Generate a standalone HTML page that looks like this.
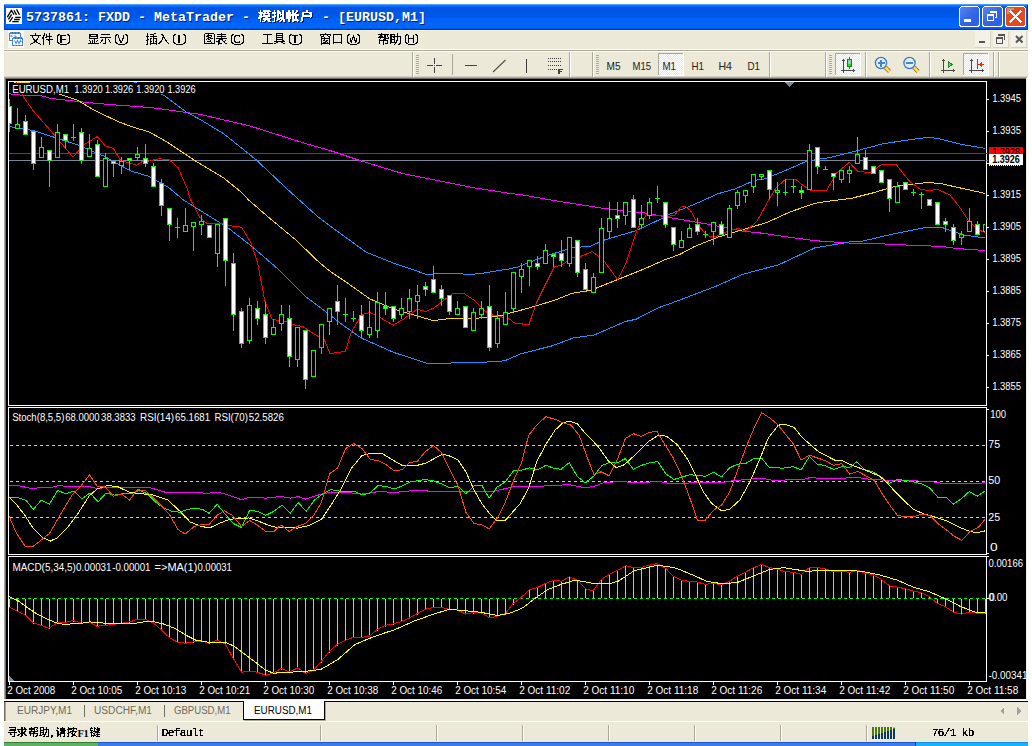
<!DOCTYPE html>
<html><head><meta charset="utf-8"><title>MetaTrader</title>
<style>html,body{margin:0;padding:0;background:#fff;overflow:hidden;width:1032px;height:746px}svg{display:block}text{white-space:pre}</style>
</head><body><svg width="1032" height="746" viewBox="0 0 1032 746" shape-rendering="crispEdges">
<rect x="0" y="0" width="1032" height="746" fill="#ffffff" />
<rect x="4" y="4" width="1024" height="1" fill="#4a9cff" />
<rect x="4" y="5" width="1024" height="1" fill="#1a78ff" />
<rect x="4" y="6" width="1024" height="1" fill="#0866f4" />
<rect x="4" y="7" width="1024" height="1" fill="#005ceb" />
<rect x="4" y="8" width="1024" height="1" fill="#0055e5" />
<rect x="4" y="9" width="1024" height="1" fill="#0055e5" />
<rect x="4" y="10" width="1024" height="1" fill="#0055e5" />
<rect x="4" y="11" width="1024" height="1" fill="#0055e5" />
<rect x="4" y="12" width="1024" height="1" fill="#0055e5" />
<rect x="4" y="13" width="1024" height="1" fill="#0058ea" />
<rect x="4" y="14" width="1024" height="1" fill="#0058ea" />
<rect x="4" y="15" width="1024" height="1" fill="#0058ea" />
<rect x="4" y="16" width="1024" height="1" fill="#0058ea" />
<rect x="4" y="17" width="1024" height="1" fill="#0058ea" />
<rect x="4" y="18" width="1024" height="1" fill="#0062f5" />
<rect x="4" y="19" width="1024" height="1" fill="#0062f5" />
<rect x="4" y="20" width="1024" height="1" fill="#0062f5" />
<rect x="4" y="21" width="1024" height="1" fill="#0062f5" />
<rect x="4" y="22" width="1024" height="1" fill="#0062f5" />
<rect x="4" y="23" width="1024" height="1" fill="#0066fa" />
<rect x="4" y="24" width="1024" height="1" fill="#0066fa" />
<rect x="4" y="25" width="1024" height="1" fill="#0066fa" />
<rect x="4" y="26" width="1024" height="1" fill="#0066fa" />
<rect x="4" y="27" width="1024" height="1" fill="#0066fa" />
<rect x="4" y="28" width="1024" height="1" fill="#0055e5" />
<rect x="4" y="29" width="1024" height="1" fill="#0036c8" />
<rect x="4" y="5" width="1" height="25" fill="#0046d8" />
<rect x="1027" y="5" width="1" height="25" fill="#0033b8" />
<rect x="6" y="8" width="16" height="16" fill="#ffffff" />
<g stroke="#000" stroke-width="1.3" fill="none" shape-rendering="geometricPrecision"><path d="M7.3,17.2 L11.3,10.5 L14.1,14.7 M13.9,10.2 L16.5,14.9 M16.5,9.4 L19.5,14.7 M8.4,19.4 L11.6,14.3 M9.5,21.9 L12.7,17.2 M15.2,17.4 L20.8,17.4 M14,19.5 L19.7,19.5 M12.2,21.6 L18.6,21.6"/></g>
<text x="27" y="22" font-family="Liberation Mono" font-size="13.34" fill="#0a1e6e" font-weight="bold" >5737861:&#160;FXDD&#160;-&#160;MetaTrader&#160;-&#160;</text>
<path d="M261,11h1v1h-1zM264,11h7v1h-7zM261,12h1v1h-1zM264,12h8v1h-8zM259,13h5v1h-5zM265,13h2v1h-2zM268,13h2v1h-2zM260,14h11v1h-11zM261,15h2v1h-2zM264,15h2v1h-2zM269,15h2v1h-2zM260,16h3v1h-3zM264,16h7v1h-7zM260,17h11v1h-11zM259,18h4v1h-4zM266,18h3v1h-3zM259,19h3v1h-3zM264,19h8v1h-8zM261,20h1v1h-1zM264,20h7v1h-7zM261,21h1v1h-1zM265,21h2v1h-2zM268,21h3v1h-3zM261,22h1v1h-1zM263,22h3v1h-3zM269,22h3v1h-3zM275,11h1v1h-1zM278,11h2v1h-2zM283,11h2v1h-2zM275,12h1v1h-1zM278,12h3v1h-3zM283,12h2v1h-2zM273,13h4v1h-4zM278,13h4v1h-4zM283,13h2v1h-2zM273,14h4v1h-4zM278,14h4v1h-4zM283,14h2v1h-2zM275,15h1v1h-1zM278,15h2v1h-2zM281,15h4v1h-4zM275,16h2v1h-2zM278,16h2v1h-2zM281,16h1v1h-1zM283,16h2v1h-2zM273,17h4v1h-4zM278,17h2v1h-2zM283,17h2v1h-2zM273,18h3v1h-3zM278,18h2v1h-2zM281,18h4v1h-4zM275,19h1v1h-1zM278,19h7v1h-7zM275,20h1v1h-1zM278,20h3v1h-3zM282,20h4v1h-4zM275,21h1v1h-1zM277,21h2v1h-2zM281,21h2v1h-2zM284,21h2v1h-2zM273,22h3v1h-3zM280,22h2v1h-2zM284,22h2v1h-2zM289,11h2v1h-2zM293,11h2v1h-2zM297,11h2v1h-2zM289,12h2v1h-2zM293,12h2v1h-2zM297,12h2v1h-2zM287,13h5v1h-5zM293,13h2v1h-2zM296,13h2v1h-2zM287,14h5v1h-5zM293,14h4v1h-4zM287,15h13v1h-13zM287,16h13v1h-13zM287,17h5v1h-5zM293,17h2v1h-2zM296,17h2v1h-2zM287,18h5v1h-5zM293,18h2v1h-2zM296,18h2v1h-2zM287,19h5v1h-5zM293,19h2v1h-2zM296,19h2v1h-2zM289,20h2v1h-2zM293,20h6v1h-6zM289,21h2v1h-2zM293,21h7v1h-7zM289,22h2v1h-2zM293,22h2v1h-2zM298,22h1v1h-1zM307,11h2v1h-2zM307,12h2v1h-2zM303,13h10v1h-10zM303,14h2v1h-2zM310,14h3v1h-3zM303,15h2v1h-2zM311,15h2v1h-2zM303,16h10v1h-10zM303,17h10v1h-10zM302,18h2v1h-2zM311,18h1v1h-1zM302,19h2v1h-2zM302,20h2v1h-2zM302,21h2v1h-2zM301,22h2v1h-2z" fill="#0a1e6e"/>
<text x="315" y="22" font-family="Liberation Mono" font-size="13.34" fill="#0a1e6e" font-weight="bold" >&#160;-&#160;[EURUSD,M1]</text>
<text x="26" y="21" font-family="Liberation Mono" font-size="13.34" fill="#ffffff" font-weight="bold" >5737861:&#160;FXDD&#160;-&#160;MetaTrader&#160;-&#160;</text>
<path d="M260,10h1v1h-1zM263,10h7v1h-7zM260,11h1v1h-1zM263,11h8v1h-8zM258,12h5v1h-5zM264,12h2v1h-2zM267,12h2v1h-2zM259,13h11v1h-11zM260,14h2v1h-2zM263,14h2v1h-2zM268,14h2v1h-2zM259,15h3v1h-3zM263,15h7v1h-7zM259,16h11v1h-11zM258,17h4v1h-4zM265,17h3v1h-3zM258,18h3v1h-3zM263,18h8v1h-8zM260,19h1v1h-1zM263,19h7v1h-7zM260,20h1v1h-1zM264,20h2v1h-2zM267,20h3v1h-3zM260,21h1v1h-1zM262,21h3v1h-3zM268,21h3v1h-3zM274,10h1v1h-1zM277,10h2v1h-2zM282,10h2v1h-2zM274,11h1v1h-1zM277,11h3v1h-3zM282,11h2v1h-2zM272,12h4v1h-4zM277,12h4v1h-4zM282,12h2v1h-2zM272,13h4v1h-4zM277,13h4v1h-4zM282,13h2v1h-2zM274,14h1v1h-1zM277,14h2v1h-2zM280,14h4v1h-4zM274,15h2v1h-2zM277,15h2v1h-2zM280,15h1v1h-1zM282,15h2v1h-2zM272,16h4v1h-4zM277,16h2v1h-2zM282,16h2v1h-2zM272,17h3v1h-3zM277,17h2v1h-2zM280,17h4v1h-4zM274,18h1v1h-1zM277,18h7v1h-7zM274,19h1v1h-1zM277,19h3v1h-3zM281,19h4v1h-4zM274,20h1v1h-1zM276,20h2v1h-2zM280,20h2v1h-2zM283,20h2v1h-2zM272,21h3v1h-3zM279,21h2v1h-2zM283,21h2v1h-2zM288,10h2v1h-2zM292,10h2v1h-2zM296,10h2v1h-2zM288,11h2v1h-2zM292,11h2v1h-2zM296,11h2v1h-2zM286,12h5v1h-5zM292,12h2v1h-2zM295,12h2v1h-2zM286,13h5v1h-5zM292,13h4v1h-4zM286,14h13v1h-13zM286,15h13v1h-13zM286,16h5v1h-5zM292,16h2v1h-2zM295,16h2v1h-2zM286,17h5v1h-5zM292,17h2v1h-2zM295,17h2v1h-2zM286,18h5v1h-5zM292,18h2v1h-2zM295,18h2v1h-2zM288,19h2v1h-2zM292,19h6v1h-6zM288,20h2v1h-2zM292,20h7v1h-7zM288,21h2v1h-2zM292,21h2v1h-2zM297,21h1v1h-1zM306,10h2v1h-2zM306,11h2v1h-2zM302,12h10v1h-10zM302,13h2v1h-2zM309,13h3v1h-3zM302,14h2v1h-2zM310,14h2v1h-2zM302,15h10v1h-10zM302,16h10v1h-10zM301,17h2v1h-2zM310,17h1v1h-1zM301,18h2v1h-2zM301,19h2v1h-2zM301,20h2v1h-2zM300,21h2v1h-2z" fill="#ffffff"/>
<text x="314" y="21" font-family="Liberation Mono" font-size="13.34" fill="#ffffff" font-weight="bold" >&#160;-&#160;[EURUSD,M1]</text>
<defs><linearGradient id="btng" x1="0" y1="0" x2="1" y2="1"><stop offset="0" stop-color="#5a88f4"/><stop offset="0.5" stop-color="#3466e6"/><stop offset="0.85" stop-color="#2a5ee6"/><stop offset="1" stop-color="#4a8af8"/></linearGradient></defs>
<rect x="959.5" y="6.5" width="20" height="20" rx="3" fill="url(#btng)" stroke="#ffffff" stroke-width="1"/>
<rect x="964" y="19" width="7" height="3" fill="#ffffff" />
<rect x="982.5" y="6.5" width="20" height="20" rx="3" fill="url(#btng)" stroke="#ffffff" stroke-width="1"/>
<path d="M990.5,11.5 h6 v6 h-1.5" fill="none" stroke="#fff" stroke-width="1"/>
<rect x="990" y="11" width="7" height="2" fill="#ffffff" />
<rect x="987.5" y="14.5" width="6" height="6" fill="none" stroke="#fff" stroke-width="1"/>
<rect x="987" y="14" width="7" height="2" fill="#ffffff" />
<rect x="1005.5" y="6.5" width="20" height="20" rx="3" fill="#e8481a" stroke="#ffffff" stroke-width="1"/>
<path d="M1006.5,8 h7 v2 h-5 v4 h-2 z" fill="#b8aaa0" opacity="0.8"/>
<path d="M1010.5,11.5 L1020.5,21.5 M1020.5,11.5 L1010.5,21.5" stroke="#fff" stroke-width="2.2" stroke-linecap="square"/>
<rect x="4" y="30" width="1024" height="19" fill="#ece9d8" />
<rect x="4" y="30" width="1024" height="1" fill="#f6f2e2" />
<rect x="4" y="49" width="1024" height="1" fill="#ffffff" />
<rect x="4" y="50" width="1024" height="1" fill="#aca899" />
<rect x="4" y="51" width="1024" height="1" fill="#ffffff" />
<rect x="8" y="31" width="16" height="17" fill="#fafafa" />
<rect x="9" y="32" width="12" height="9" fill="#ffffff" />
<path d="M9.5,33 V40.5 H20.5 V33" fill="none" stroke="#3f7a68" stroke-width="1" />
<path d="M10,33 H20" fill="none" stroke="#3f7a68" stroke-width="2" />
<path d="M9.5,33 V40.5 H20.5 V33" fill="none" stroke="#4a8cf2" stroke-width="1" stroke-dasharray="2,1"/>
<path d="M10,33 H20" fill="none" stroke="#4a8cf2" stroke-width="2" stroke-dasharray="2,1"/>
<path d="M10.5,36.5 L11.5,35.5 L12.5,36.5 M14.5,35.5 L15.5,36.5 L16.5,37.5" fill="none" stroke="#4a8cf2" stroke-width="1.2" shape-rendering="geometricPrecision"/>
<rect x="12" y="37" width="11" height="9" fill="#ffffff" />
<path d="M12.5,38 V45.5 H22.5 V38" fill="none" stroke="#3f7a68" stroke-width="1" />
<path d="M13,38 H22" fill="none" stroke="#3f7a68" stroke-width="2" />
<path d="M12.5,38 V45.5 H22.5 V38" fill="none" stroke="#4a8cf2" stroke-width="1" stroke-dasharray="2,1"/>
<path d="M13,38 H22" fill="none" stroke="#4a8cf2" stroke-width="2" stroke-dasharray="2,1"/>
<path d="M14.5,40.5 L16,43.5 L17.5,40.5 L19,43.5 L20.5,40.5 L21.2,42" fill="none" stroke="#4a8cf2" stroke-width="1.1" shape-rendering="geometricPrecision"/>
<path d="M35,33h1v1h-1zM35,34h1v1h-1zM30,35h11v1h-11zM32,36h1v1h-1zM38,36h1v1h-1zM32,37h1v1h-1zM38,37h1v1h-1zM33,38h1v1h-1zM37,38h1v1h-1zM33,39h2v1h-2zM36,39h2v1h-2zM34,40h3v1h-3zM34,41h3v1h-3zM33,42h2v1h-2zM36,42h2v1h-2zM31,43h2v1h-2zM38,43h2v1h-2zM30,44h1v1h-1zM40,44h1v1h-1zM44,33h1v1h-1zM49,33h1v1h-1zM44,34h1v1h-1zM46,34h1v1h-1zM49,34h1v1h-1zM43,35h2v1h-2zM46,35h1v1h-1zM49,35h1v1h-1zM43,36h1v1h-1zM46,36h6v1h-6zM42,37h2v1h-2zM45,37h2v1h-2zM49,37h1v1h-1zM42,38h2v1h-2zM49,38h1v1h-1zM43,39h1v1h-1zM46,39h7v1h-7zM43,40h1v1h-1zM48,40h2v1h-2zM43,41h1v1h-1zM49,41h1v1h-1zM43,42h1v1h-1zM49,42h1v1h-1zM43,43h1v1h-1zM49,43h1v1h-1zM43,44h1v1h-1zM49,44h1v1h-1z" fill="#000"/>
<path d="M59.5,34 L57.5,36 L57.5,42 L59.5,44 M67.5,34 L69.5,36 L69.5,42 L67.5,44" fill="none" stroke="#000" stroke-width="1" shape-rendering="crispEdges"/>
<path d="M60,35h6v1h-6zM60,36h2v1h-2zM60,37h2v1h-2zM60,38h2v1h-2zM60,39h6v1h-6zM60,40h2v1h-2zM60,41h2v1h-2zM60,42h2v1h-2z" fill="#000"/>
<rect x="60" y="44" width="7" height="1" fill="#000" />
<path d="M89,34h9v1h-9zM89,35h2v1h-2zM96,35h2v1h-2zM89,36h9v1h-9zM89,37h1v1h-1zM97,37h1v1h-1zM89,38h9v1h-9zM94,39h1v1h-1zM89,40h1v1h-1zM92,40h1v1h-1zM94,40h1v1h-1zM97,40h1v1h-1zM90,41h1v1h-1zM92,41h1v1h-1zM94,41h1v1h-1zM96,41h1v1h-1zM90,42h1v1h-1zM92,42h1v1h-1zM94,42h1v1h-1zM88,43h11v1h-11zM101,34h9v1h-9zM100,37h11v1h-11zM105,38h1v1h-1zM102,39h1v1h-1zM105,39h1v1h-1zM108,39h1v1h-1zM101,40h2v1h-2zM105,40h1v1h-1zM109,40h1v1h-1zM101,41h1v1h-1zM105,41h1v1h-1zM109,41h1v1h-1zM100,42h1v1h-1zM105,42h1v1h-1zM110,42h1v1h-1zM103,43h3v1h-3z" fill="#000"/>
<path d="M117.5,34 L115.5,36 L115.5,42 L117.5,44 M125.5,34 L127.5,36 L127.5,42 L125.5,44" fill="none" stroke="#000" stroke-width="1" shape-rendering="crispEdges"/>
<path d="M118,35h1v1h-1zM123,35h1v1h-1zM118,36h1v1h-1zM123,36h1v1h-1zM118,37h1v1h-1zM123,37h1v1h-1zM119,38h1v1h-1zM122,38h2v1h-2zM119,39h1v1h-1zM122,39h1v1h-1zM119,40h2v1h-2zM122,40h1v1h-1zM120,41h2v1h-2zM120,42h2v1h-2z" fill="#000"/>
<rect x="118" y="44" width="7" height="1" fill="#000" />
<path d="M147,33h1v1h-1zM154,33h2v1h-2zM147,34h1v1h-1zM150,34h4v1h-4zM147,35h1v1h-1zM153,35h1v1h-1zM146,36h3v1h-3zM150,36h7v1h-7zM147,37h1v1h-1zM153,37h1v1h-1zM147,38h1v1h-1zM150,38h2v1h-2zM153,38h4v1h-4zM147,39h2v1h-2zM150,39h1v1h-1zM153,39h1v1h-1zM156,39h1v1h-1zM146,40h2v1h-2zM150,40h1v1h-1zM153,40h1v1h-1zM156,40h1v1h-1zM147,41h1v1h-1zM150,41h2v1h-2zM153,41h1v1h-1zM155,41h2v1h-2zM147,42h1v1h-1zM150,42h1v1h-1zM153,42h1v1h-1zM156,42h1v1h-1zM147,43h1v1h-1zM150,43h7v1h-7zM146,44h2v1h-2zM150,44h1v1h-1zM156,44h1v1h-1zM161,34h2v1h-2zM162,35h2v1h-2zM163,36h1v1h-1zM162,37h3v1h-3zM162,38h1v1h-1zM164,38h1v1h-1zM162,39h1v1h-1zM165,39h1v1h-1zM161,40h1v1h-1zM165,40h2v1h-2zM160,41h2v1h-2zM166,41h1v1h-1zM159,42h2v1h-2zM167,42h1v1h-1zM158,43h2v1h-2zM168,43h1v1h-1z" fill="#000"/>
<path d="M175.5,34 L173.5,36 L173.5,42 L175.5,44 M183.5,34 L185.5,36 L185.5,42 L183.5,44" fill="none" stroke="#000" stroke-width="1" shape-rendering="crispEdges"/>
<path d="M178,35h2v1h-2zM178,36h2v1h-2zM178,37h2v1h-2zM178,38h2v1h-2zM178,39h2v1h-2zM178,40h2v1h-2zM178,41h2v1h-2zM178,42h2v1h-2z" fill="#000"/>
<rect x="176" y="44" width="7" height="1" fill="#000" />
<path d="M205,33h9v1h-9zM204,34h1v1h-1zM208,34h1v1h-1zM214,34h1v1h-1zM204,35h1v1h-1zM207,35h5v1h-5zM214,35h1v1h-1zM204,36h1v1h-1zM206,36h3v1h-3zM211,36h1v1h-1zM214,36h1v1h-1zM204,37h1v1h-1zM208,37h3v1h-3zM214,37h1v1h-1zM204,38h1v1h-1zM207,38h2v1h-2zM210,38h3v1h-3zM214,38h1v1h-1zM204,39h1v1h-1zM206,39h1v1h-1zM208,39h2v1h-2zM214,39h1v1h-1zM204,40h1v1h-1zM210,40h1v1h-1zM214,40h1v1h-1zM204,41h1v1h-1zM207,41h4v1h-4zM214,41h1v1h-1zM204,42h1v1h-1zM211,42h1v1h-1zM214,42h1v1h-1zM204,43h11v1h-11zM221,33h1v1h-1zM217,34h9v1h-9zM221,35h1v1h-1zM217,36h9v1h-9zM221,37h1v1h-1zM216,38h11v1h-11zM219,39h4v1h-4zM218,40h2v1h-2zM222,40h1v1h-1zM225,40h1v1h-1zM216,41h4v1h-4zM223,41h2v1h-2zM218,42h2v1h-2zM224,42h1v1h-1zM218,43h4v1h-4zM225,43h2v1h-2zM218,44h1v1h-1z" fill="#000"/>
<path d="M233.5,34 L231.5,36 L231.5,42 L233.5,44 M241.5,34 L243.5,36 L243.5,42 L241.5,44" fill="none" stroke="#000" stroke-width="1" shape-rendering="crispEdges"/>
<path d="M235,35h5v1h-5zM234,36h2v1h-2zM239,36h1v1h-1zM234,37h1v1h-1zM234,38h1v1h-1zM234,39h1v1h-1zM234,40h1v1h-1zM234,41h2v1h-2zM239,41h1v1h-1zM235,42h5v1h-5z" fill="#000"/>
<rect x="234" y="44" width="7" height="1" fill="#000" />
<path d="M263,34h9v1h-9zM267,35h1v1h-1zM267,36h1v1h-1zM267,37h1v1h-1zM267,38h1v1h-1zM267,39h1v1h-1zM267,40h1v1h-1zM267,41h1v1h-1zM267,42h1v1h-1zM262,43h11v1h-11zM276,33h7v1h-7zM276,34h1v1h-1zM282,34h1v1h-1zM276,35h7v1h-7zM276,36h1v1h-1zM282,36h1v1h-1zM276,37h7v1h-7zM276,38h1v1h-1zM282,38h1v1h-1zM276,39h7v1h-7zM276,40h1v1h-1zM282,40h2v1h-2zM274,41h11v1h-11zM276,42h2v1h-2zM281,42h2v1h-2zM274,43h2v1h-2zM283,43h2v1h-2z" fill="#000"/>
<path d="M291.5,34 L289.5,36 L289.5,42 L291.5,44 M299.5,34 L301.5,36 L301.5,42 L299.5,44" fill="none" stroke="#000" stroke-width="1" shape-rendering="crispEdges"/>
<path d="M292,35h6v1h-6zM294,36h2v1h-2zM294,37h2v1h-2zM294,38h2v1h-2zM294,39h2v1h-2zM294,40h2v1h-2zM294,41h2v1h-2zM294,42h2v1h-2z" fill="#000"/>
<rect x="292" y="44" width="7" height="1" fill="#000" />
<path d="M325,33h1v1h-1zM320,34h11v1h-11zM320,35h1v1h-1zM323,35h1v1h-1zM327,35h1v1h-1zM330,35h1v1h-1zM321,36h3v1h-3zM328,36h2v1h-2zM321,37h1v1h-1zM324,37h1v1h-1zM329,37h1v1h-1zM321,38h9v1h-9zM321,39h1v1h-1zM324,39h1v1h-1zM329,39h1v1h-1zM321,40h1v1h-1zM323,40h2v1h-2zM326,40h2v1h-2zM329,40h1v1h-1zM321,41h1v1h-1zM325,41h2v1h-2zM329,41h1v1h-1zM321,42h1v1h-1zM323,42h3v1h-3zM327,42h1v1h-1zM329,42h1v1h-1zM321,43h9v1h-9zM321,44h1v1h-1zM329,44h1v1h-1zM333,34h9v1h-9zM333,35h1v1h-1zM341,35h1v1h-1zM333,36h1v1h-1zM341,36h1v1h-1zM333,37h1v1h-1zM341,37h1v1h-1zM333,38h1v1h-1zM341,38h1v1h-1zM333,39h1v1h-1zM341,39h1v1h-1zM333,40h1v1h-1zM341,40h1v1h-1zM333,41h1v1h-1zM341,41h1v1h-1zM333,42h9v1h-9zM333,43h1v1h-1zM341,43h1v1h-1z" fill="#000"/>
<path d="M349.5,34 L347.5,36 L347.5,42 L349.5,44 M357.5,34 L359.5,36 L359.5,42 L357.5,44" fill="none" stroke="#000" stroke-width="1" shape-rendering="crispEdges"/>
<path d="M353,35h1v1h-1zM353,36h1v1h-1zM352,37h3v1h-3zM350,38h1v1h-1zM352,38h1v1h-1zM354,38h1v1h-1zM356,38h1v1h-1zM350,39h1v1h-1zM352,39h1v1h-1zM354,39h1v1h-1zM356,39h1v1h-1zM350,40h2v1h-2zM354,40h3v1h-3zM350,41h2v1h-2zM355,41h2v1h-2zM351,42h1v1h-1zM355,42h1v1h-1z" fill="#000"/>
<rect x="350" y="44" width="7" height="1" fill="#000" />
<path d="M381,33h1v1h-1zM378,34h11v1h-11zM380,35h2v1h-2zM384,35h2v1h-2zM387,35h1v1h-1zM379,36h4v1h-4zM384,36h2v1h-2zM387,36h1v1h-1zM378,37h8v1h-8zM388,37h1v1h-1zM380,38h1v1h-1zM384,38h5v1h-5zM379,39h1v1h-1zM383,39h3v1h-3zM379,40h9v1h-9zM379,41h1v1h-1zM383,41h1v1h-1zM387,41h1v1h-1zM379,42h1v1h-1zM383,42h1v1h-1zM387,42h1v1h-1zM379,43h1v1h-1zM383,43h1v1h-1zM385,43h3v1h-3zM383,44h1v1h-1zM397,33h1v1h-1zM390,34h5v1h-5zM397,34h1v1h-1zM390,35h2v1h-2zM394,35h1v1h-1zM397,35h1v1h-1zM390,36h11v1h-11zM390,37h2v1h-2zM393,37h2v1h-2zM397,37h1v1h-1zM400,37h1v1h-1zM390,38h2v1h-2zM394,38h1v1h-1zM397,38h1v1h-1zM400,38h1v1h-1zM390,39h5v1h-5zM397,39h1v1h-1zM400,39h1v1h-1zM390,40h2v1h-2zM394,40h1v1h-1zM396,40h2v1h-2zM400,40h1v1h-1zM390,41h2v1h-2zM394,41h1v1h-1zM396,41h1v1h-1zM400,41h1v1h-1zM390,42h7v1h-7zM400,42h1v1h-1zM390,43h1v1h-1zM395,43h1v1h-1zM399,43h2v1h-2zM394,44h1v1h-1zM398,44h2v1h-2z" fill="#000"/>
<path d="M407.5,34 L405.5,36 L405.5,42 L407.5,44 M415.5,34 L417.5,36 L417.5,42 L415.5,44" fill="none" stroke="#000" stroke-width="1" shape-rendering="crispEdges"/>
<path d="M408,35h1v1h-1zM413,35h1v1h-1zM408,36h1v1h-1zM413,36h1v1h-1zM408,37h1v1h-1zM413,37h1v1h-1zM408,38h6v1h-6zM408,39h1v1h-1zM413,39h1v1h-1zM408,40h1v1h-1zM413,40h1v1h-1zM408,41h1v1h-1zM413,41h1v1h-1zM408,42h1v1h-1zM413,42h1v1h-1z" fill="#000"/>
<rect x="408" y="44" width="7" height="1" fill="#000" />
<rect x="975" y="31" width="16" height="17" fill="#f3f1e8" />
<rect x="990" y="31" width="1" height="17" fill="#d8d4c4" />
<rect x="975" y="47" width="16" height="1" fill="#d8d4c4" />
<rect x="993" y="31" width="16" height="17" fill="#f3f1e8" />
<rect x="1008" y="31" width="1" height="17" fill="#d8d4c4" />
<rect x="993" y="47" width="16" height="1" fill="#d8d4c4" />
<rect x="1011" y="31" width="16" height="17" fill="#f3f1e8" />
<rect x="1026" y="31" width="1" height="17" fill="#d8d4c4" />
<rect x="1011" y="47" width="16" height="1" fill="#d8d4c4" />
<rect x="979" y="41" width="6" height="2" fill="#555" />
<rect x="998" y="34" width="7" height="1" fill="#555" />
<rect x="998" y="35" width="7" height="1" fill="#555" />
<rect x="1004" y="34" width="1" height="6" fill="#555" />
<rect x="996" y="37" width="7" height="2" fill="#555" />
<rect x="996" y="37" width="1" height="7" fill="#555" />
<rect x="1002" y="37" width="1" height="7" fill="#555" />
<rect x="996" y="43" width="7" height="1" fill="#555" />
<path d="M1016,36 L1022.5,42.5 M1022.5,36 L1016,42.5" stroke="#555" stroke-width="2" shape-rendering="geometricPrecision"/>
<rect x="4" y="52" width="1024" height="25" fill="#ece9d8" />
<rect x="4" y="76" width="1024" height="1" fill="#d6d2c2" />
<rect x="412" y="52" width="1" height="25" fill="#aca899" />
<rect x="413" y="52" width="1" height="25" fill="#ffffff" />
<rect x="416" y="55" width="3" height="1" fill="#b0ac9c" />
<rect x="416" y="57" width="3" height="1" fill="#b0ac9c" />
<rect x="416" y="59" width="3" height="1" fill="#b0ac9c" />
<rect x="416" y="61" width="3" height="1" fill="#b0ac9c" />
<rect x="416" y="63" width="3" height="1" fill="#b0ac9c" />
<rect x="416" y="65" width="3" height="1" fill="#b0ac9c" />
<rect x="416" y="67" width="3" height="1" fill="#b0ac9c" />
<rect x="416" y="69" width="3" height="1" fill="#b0ac9c" />
<rect x="416" y="71" width="3" height="1" fill="#b0ac9c" />
<rect x="416" y="73" width="3" height="1" fill="#b0ac9c" />
<rect x="427" y="65" width="6" height="1" fill="#444" />
<rect x="436" y="65" width="6" height="1" fill="#444" />
<rect x="434" y="58" width="1" height="6" fill="#444" />
<rect x="434" y="67" width="1" height="6" fill="#444" />
<rect x="434" y="65" width="1" height="1" fill="#6a6850" />
<rect x="452" y="54" width="1" height="21" fill="#aca899" />
<rect x="465" y="65" width="12" height="1" fill="#444" />
<path d="M493,72 L505.5,60" stroke="#505050" stroke-width="1.1" shape-rendering="geometricPrecision"/>
<rect x="526" y="59" width="1" height="14" fill="#3c3c3c" />
<rect x="548" y="58" width="1" height="1" fill="#404040" />
<rect x="550" y="58" width="1" height="1" fill="#404040" />
<rect x="552" y="58" width="1" height="1" fill="#404040" />
<rect x="554" y="58" width="1" height="1" fill="#404040" />
<rect x="556" y="58" width="1" height="1" fill="#404040" />
<rect x="558" y="58" width="1" height="1" fill="#404040" />
<rect x="560" y="58" width="1" height="1" fill="#404040" />
<rect x="548" y="61" width="1" height="1" fill="#404040" />
<rect x="550" y="61" width="1" height="1" fill="#404040" />
<rect x="552" y="61" width="1" height="1" fill="#404040" />
<rect x="554" y="61" width="1" height="1" fill="#404040" />
<rect x="556" y="61" width="1" height="1" fill="#404040" />
<rect x="558" y="61" width="1" height="1" fill="#404040" />
<rect x="560" y="61" width="1" height="1" fill="#404040" />
<rect x="548" y="65" width="1" height="1" fill="#404040" />
<rect x="550" y="65" width="1" height="1" fill="#404040" />
<rect x="552" y="65" width="1" height="1" fill="#404040" />
<rect x="554" y="65" width="1" height="1" fill="#404040" />
<rect x="556" y="65" width="1" height="1" fill="#404040" />
<rect x="558" y="65" width="1" height="1" fill="#404040" />
<rect x="560" y="65" width="1" height="1" fill="#404040" />
<rect x="548" y="69" width="1" height="1" fill="#404040" />
<rect x="550" y="69" width="1" height="1" fill="#404040" />
<rect x="552" y="69" width="1" height="1" fill="#404040" />
<rect x="554" y="69" width="1" height="1" fill="#404040" />
<rect x="556" y="69" width="1" height="1" fill="#404040" />
<rect x="558" y="69" width="1" height="5" fill="#404040" />
<rect x="559" y="69" width="1" height="5" fill="#404040" />
<rect x="558" y="69" width="5" height="1" fill="#404040" />
<rect x="558" y="71" width="4" height="1" fill="#404040" />
<rect x="569" y="52" width="1" height="25" fill="#aca899" />
<rect x="570" y="52" width="1" height="25" fill="#ffffff" />
<rect x="592" y="52" width="1" height="25" fill="#aca899" />
<rect x="593" y="52" width="1" height="25" fill="#ffffff" />
<rect x="596" y="55" width="3" height="1" fill="#b0ac9c" />
<rect x="596" y="57" width="3" height="1" fill="#b0ac9c" />
<rect x="596" y="59" width="3" height="1" fill="#b0ac9c" />
<rect x="596" y="61" width="3" height="1" fill="#b0ac9c" />
<rect x="596" y="63" width="3" height="1" fill="#b0ac9c" />
<rect x="596" y="65" width="3" height="1" fill="#b0ac9c" />
<rect x="596" y="67" width="3" height="1" fill="#b0ac9c" />
<rect x="596" y="69" width="3" height="1" fill="#b0ac9c" />
<rect x="596" y="71" width="3" height="1" fill="#b0ac9c" />
<rect x="596" y="73" width="3" height="1" fill="#b0ac9c" />
<defs><pattern id="chk" width="2" height="2" patternUnits="userSpaceOnUse"><rect width="2" height="2" fill="#ebe8da"/><rect width="1" height="1" fill="#ffffff"/><rect x="1" y="1" width="1" height="1" fill="#ffffff"/></pattern></defs>
<rect x="658" y="53" width="26" height="23" fill="url(#chk)" />
<rect x="658" y="53" width="26" height="1" fill="#aca899" />
<rect x="658" y="53" width="1" height="23" fill="#aca899" />
<rect x="658" y="75" width="26" height="1" fill="#ffffff" />
<rect x="683" y="53" width="1" height="23" fill="#ffffff" />
<text x="606.5" y="69.5" font-family="Liberation Sans" font-size="10.5" fill="#222" font-weight="normal" textLength="14" lengthAdjust="spacingAndGlyphs">M5</text>
<text x="632.5" y="69.5" font-family="Liberation Sans" font-size="10.5" fill="#222" font-weight="normal" textLength="18.5" lengthAdjust="spacingAndGlyphs">M15</text>
<text x="662.5" y="69.5" font-family="Liberation Sans" font-size="10.5" fill="#222" font-weight="normal" textLength="13.5" lengthAdjust="spacingAndGlyphs">M1</text>
<text x="691.5" y="69.5" font-family="Liberation Sans" font-size="10.5" fill="#222" font-weight="normal" textLength="12.5" lengthAdjust="spacingAndGlyphs">H1</text>
<text x="718.5" y="69.5" font-family="Liberation Sans" font-size="10.5" fill="#222" font-weight="normal" textLength="13.5" lengthAdjust="spacingAndGlyphs">H4</text>
<text x="747.5" y="69.5" font-family="Liberation Sans" font-size="10.5" fill="#222" font-weight="normal" textLength="12.5" lengthAdjust="spacingAndGlyphs">D1</text>
<rect x="769" y="52" width="1" height="25" fill="#aca899" />
<rect x="770" y="52" width="1" height="25" fill="#ffffff" />
<rect x="825" y="52" width="1" height="25" fill="#aca899" />
<rect x="826" y="52" width="1" height="25" fill="#ffffff" />
<rect x="829" y="55" width="3" height="1" fill="#b0ac9c" />
<rect x="829" y="57" width="3" height="1" fill="#b0ac9c" />
<rect x="829" y="59" width="3" height="1" fill="#b0ac9c" />
<rect x="829" y="61" width="3" height="1" fill="#b0ac9c" />
<rect x="829" y="63" width="3" height="1" fill="#b0ac9c" />
<rect x="829" y="65" width="3" height="1" fill="#b0ac9c" />
<rect x="829" y="67" width="3" height="1" fill="#b0ac9c" />
<rect x="829" y="69" width="3" height="1" fill="#b0ac9c" />
<rect x="829" y="71" width="3" height="1" fill="#b0ac9c" />
<rect x="829" y="73" width="3" height="1" fill="#b0ac9c" />
<rect x="835" y="53" width="26" height="23" fill="url(#chk)" />
<rect x="835" y="53" width="26" height="1" fill="#aca899" />
<rect x="835" y="53" width="1" height="23" fill="#aca899" />
<rect x="835" y="75" width="26" height="1" fill="#ffffff" />
<rect x="860" y="53" width="1" height="23" fill="#ffffff" />
<rect x="843" y="59" width="1" height="14" fill="#4a4a4a" />
<rect x="841" y="70" width="14" height="1" fill="#4a4a4a" />
<rect x="842" y="60" width="3" height="1" fill="#4a4a4a" />
<rect x="853" y="69" width="1" height="3" fill="#4a4a4a" />
<rect x="849" y="57" width="1" height="12" fill="#00a000" />
<rect x="847.5" y="59.5" width="4" height="7" fill="#80d8b0" stroke="#009000"/>
<rect x="848" y="64" width="3" height="2" fill="#20e020" />
<rect x="865" y="52" width="1" height="25" fill="#aca899" />
<rect x="866" y="52" width="1" height="25" fill="#ffffff" />
<g shape-rendering="geometricPrecision"><path d="M885.2,67.2 L889.6,71.6" stroke="#a87818" stroke-width="4.2" stroke-linecap="butt"/><path d="M885.2,67.2 L889.6,71.6" stroke="#f4e070" stroke-width="2.4"/><circle cx="881" cy="63" r="5.6" fill="#dcefff" stroke="#3a76cc" stroke-width="1.3"/></g>
<rect x="877.5" y="62" width="7" height="2" fill="#4a86b8" />
<rect x="880" y="59.5" width="2" height="7" fill="#4a86b8" />
<g shape-rendering="geometricPrecision"><path d="M913.7,67.2 L918.1,71.6" stroke="#a87818" stroke-width="4.2" stroke-linecap="butt"/><path d="M913.7,67.2 L918.1,71.6" stroke="#f4e070" stroke-width="2.4"/><circle cx="909.5" cy="63" r="5.6" fill="#dcefff" stroke="#3a76cc" stroke-width="1.3"/></g>
<rect x="906.0" y="62" width="7" height="2" fill="#4a86b8" />
<rect x="929" y="52" width="1" height="25" fill="#aca899" />
<rect x="930" y="52" width="1" height="25" fill="#ffffff" />
<rect x="943" y="59" width="1" height="14" fill="#4a4a4a" />
<rect x="941" y="70" width="14" height="1" fill="#4a4a4a" />
<rect x="942" y="60" width="3" height="1" fill="#4a4a4a" />
<rect x="953" y="69" width="1" height="3" fill="#4a4a4a" />
<path d="M948.5,61.5 L952,64.5 L948.5,67.5 Z" fill="#70d090" stroke="#109010" stroke-width="1"/>
<rect x="963" y="53" width="26" height="23" fill="url(#chk)" />
<rect x="963" y="53" width="26" height="1" fill="#aca899" />
<rect x="963" y="53" width="1" height="23" fill="#aca899" />
<rect x="963" y="75" width="26" height="1" fill="#ffffff" />
<rect x="988" y="53" width="1" height="23" fill="#ffffff" />
<rect x="971" y="59" width="1" height="14" fill="#4a4a4a" />
<rect x="969" y="70" width="15" height="1" fill="#4a4a4a" />
<rect x="970" y="60" width="3" height="1" fill="#4a4a4a" />
<rect x="982" y="69" width="1" height="3" fill="#4a4a4a" />
<rect x="977" y="59" width="1" height="10" fill="#1a6aa0" />
<path d="M978.5,64.5 L981.5,62 L981.5,67 Z" fill="#d83000"/>
<rect x="980" y="64" width="4" height="1" fill="#d83000" />
<rect x="993" y="52" width="1" height="25" fill="#aca899" />
<rect x="994" y="52" width="1" height="25" fill="#ffffff" />
<rect x="998" y="52" width="1" height="25" fill="#aca899" />
<rect x="999" y="52" width="1" height="25" fill="#ffffff" />
<rect x="4" y="77" width="1024" height="1" fill="#aca899" />
<rect x="5" y="78" width="1022" height="1" fill="#716f64" />
<rect x="4" y="77" width="1" height="624" fill="#aca899" />
<rect x="5" y="78" width="1" height="622" fill="#716f64" />
<rect x="1026" y="78" width="1" height="623" fill="#f1efe2" />
<rect x="1027" y="77" width="1" height="624" fill="#ffffff" />
<rect x="4" y="699" width="1024" height="1" fill="#f1efe2" />
<rect x="4" y="700" width="1024" height="1" fill="#ffffff" />
<rect x="6" y="79" width="1020" height="620" fill="#000000" />
<rect x="8" y="81" width="979" height="1" fill="#ffffff" />
<rect x="8" y="405" width="979" height="1" fill="#ffffff" />
<rect x="8" y="81" width="1" height="325" fill="#ffffff" />
<rect x="986" y="81" width="1" height="325" fill="#ffffff" />
<rect x="8" y="407" width="979" height="1" fill="#ffffff" />
<rect x="8" y="554" width="979" height="1" fill="#ffffff" />
<rect x="8" y="407" width="1" height="148" fill="#ffffff" />
<rect x="986" y="407" width="1" height="148" fill="#ffffff" />
<rect x="8" y="556" width="979" height="1" fill="#ffffff" />
<rect x="8" y="681" width="979" height="1" fill="#ffffff" />
<rect x="8" y="556" width="1" height="126" fill="#ffffff" />
<rect x="986" y="556" width="1" height="126" fill="#ffffff" />
<svg x="9" y="82" width="976" height="323" overflow="hidden"><g transform="translate(-9,-82)">
<rect x="9" y="153" width="977" height="1" fill="#ff0000" />
<rect x="9" y="160" width="977" height="1" fill="#778899" />
<polyline points="9.00,93.70 22.00,95.30 40.00,95.30 51.00,98.50 88.00,102.50 110.00,104.60 134.00,106.30 150.00,107.50 165.00,109.40 187.00,112.60 200.00,114.30 250.40,126.10 304.70,143.30 330.00,150.50 360.80,160.80 402.40,173.50 438.50,180.70 474.70,187.90 510.00,193.40 525.00,195.30 550.60,200.00 605.00,208.60 645.00,213.00 670.00,217.70 706.00,223.80 742.00,231.00 765.00,233.50 779.00,235.80 815.00,240.70 850.00,243.10 873.00,243.40 916.00,245.50 940.00,246.30 959.00,248.70 985.00,250.50" fill="none" stroke="#ff00ff" stroke-width="1" shape-rendering="crispEdges"/>
<polyline points="134.00,82.20 139.00,83.50 164.00,95.30 187.10,112.60 199.00,118.80 223.30,133.40 255.90,159.60 286.60,188.50 299.30,200.00 317.40,216.30 330.00,225.90 366.20,252.20 393.30,263.00 425.90,274.20 456.60,273.50 470.00,274.50 483.80,273.00 510.00,268.80 518.10,266.90 545.20,256.10 572.40,247.90 590.40,246.10 604.90,239.80 635.70,230.80 662.80,218.10 670.00,214.10 694.10,204.50 718.30,193.60 735.00,189.00 754.50,180.30 765.00,178.80 790.70,168.30 805.00,161.90 814.80,159.80 830.00,157.50 850.00,152.60 883.60,143.60 915.80,138.90 928.70,137.20 941.50,139.30 963.00,144.70 985.00,148.30" fill="none" stroke="#1e90ff" stroke-width="1" shape-rendering="crispEdges"/>
<polyline points="9.00,126.60 33.70,130.60 56.20,137.90 80.30,145.90 104.50,156.40 130.20,170.80 149.50,176.50 163.60,184.90 168.00,186.90 183.50,200.00 205.20,213.60 226.90,227.10 250.40,245.20 277.60,268.70 304.70,295.90 326.40,312.20 340.00,323.00 360.80,337.80 393.30,352.30 429.50,364.00 447.60,363.10 483.80,362.20 500.00,361.20 505.20,360.60 520.90,353.70 552.30,345.80 573.30,338.00 594.20,335.00 625.60,321.40 636.00,319.30 657.00,308.30 679.70,300.10 718.30,285.30 742.40,274.40 778.60,264.80 814.80,247.90 850.00,241.90 862.20,241.20 894.30,233.70 926.50,227.30 941.50,227.30 963.00,234.80 985.00,238.00" fill="none" stroke="#1e90ff" stroke-width="1" shape-rendering="crispEdges"/>
<polyline points="14.00,82.40 27.00,82.50 30.00,83.00 62.70,95.30 77.00,100.00 96.40,111.40 120.50,122.60 136.60,128.20 147.90,131.50 160.00,137.90 168.00,142.70 196.20,161.40 223.30,177.70 241.40,192.20 248.60,200.00 268.50,217.20 295.70,239.80 319.20,262.40 330.00,271.20 348.10,283.50 369.80,298.90 393.30,308.80 411.40,314.30 433.10,320.60 447.60,318.80 483.80,317.90 500.00,315.80 527.10,308.50 554.30,300.40 572.40,293.20 590.40,290.40 617.60,279.60 644.70,268.70 662.80,260.60 680.00,254.30 694.10,246.70 718.30,237.00 742.40,229.80 766.60,222.60 790.70,211.70 814.80,203.30 830.00,201.00 851.40,198.30 872.90,192.90 894.30,186.50 915.80,183.90 926.50,182.60 939.40,183.30 958.70,187.60 985.00,193.40" fill="none" stroke="#ffd700" stroke-width="1" shape-rendering="crispEdges"/>
<polyline points="16.00,82.00 17.00,83.00 22.50,95.30 33.00,110.50 51.40,131.50 73.10,157.20 83.60,145.10 97.20,136.60 105.30,145.90 113.30,148.30 120.50,160.40 136.60,165.20 141.40,162.00 147.90,161.20 159.10,158.80 169.00,159.60 178.10,167.70 187.10,188.50 190.70,200.00 199.80,217.20 207.00,223.50 221.50,223.20 232.40,226.20 241.40,227.10 250.40,241.60 257.70,263.30 264.90,301.30 272.10,319.40 284.80,321.20 293.90,324.80 302.90,326.60 313.80,333.90 324.40,340.00 330.00,353.70 345.40,351.30 351.00,332.80 359.00,319.00 362.60,314.30 369.80,312.50 380.60,317.90 393.30,325.10 404.20,318.80 416.80,309.20 425.90,311.50 434.00,307.90 442.20,301.60 453.00,293.50 463.90,293.50 474.70,300.70 485.60,311.50 492.80,315.20 509.00,318.50 514.50,323.00 528.90,324.80 536.20,303.10 554.30,266.90 561.50,265.10 572.40,257.90 581.40,256.10 592.30,251.60 603.10,259.70 617.60,279.60 626.60,261.50 637.50,228.90 646.50,214.50 655.60,215.40 668.20,216.30 674.80,215.30 680.90,206.90 685.70,206.90 690.50,210.50 699.00,226.20 707.40,235.80 714.60,237.00 723.10,233.40 731.50,229.80 738.80,228.60 746.00,231.00 756.90,221.40 769.00,199.60 776.20,187.60 785.80,179.10 795.50,179.10 802.70,185.20 810.00,190.00 826.80,190.00 836.50,173.10 849.30,162.50 857.90,171.50 870.80,172.50 881.50,164.60 896.50,165.00 909.40,181.10 920.10,189.10 928.70,190.80 937.20,189.10 950.10,195.10 958.70,205.80 969.40,221.90 978.00,229.40 985.00,232.60" fill="none" stroke="#ff0000" stroke-width="1" shape-rendering="crispEdges"/>
<rect x="9" y="99" width="1" height="8" fill="#00ff00" />
<rect x="9" y="123" width="1" height="9" fill="#00ff00" />
<rect x="7" y="106" width="5" height="18" fill="#00ff00" />
<rect x="8" y="107" width="3" height="16" fill="#ffffff" />
<rect x="17" y="108" width="1" height="17" fill="#00ff00" />
<rect x="15" y="124" width="5" height="5" fill="#00ff00" />
<rect x="16" y="125" width="3" height="3" fill="#000000" />
<rect x="25" y="115" width="1" height="7" fill="#00ff00" />
<rect x="23" y="121" width="5" height="14" fill="#00ff00" />
<rect x="24" y="122" width="3" height="12" fill="#ffffff" />
<rect x="33" y="163" width="1" height="7" fill="#00ff00" />
<rect x="31" y="131" width="5" height="33" fill="#00ff00" />
<rect x="32" y="132" width="3" height="31" fill="#ffffff" />
<rect x="41" y="137" width="1" height="11" fill="#00ff00" />
<rect x="39" y="147" width="5" height="11" fill="#00ff00" />
<rect x="40" y="148" width="3" height="9" fill="#000000" />
<rect x="49" y="160" width="1" height="27" fill="#00ff00" />
<rect x="47" y="150" width="5" height="11" fill="#00ff00" />
<rect x="48" y="151" width="3" height="9" fill="#ffffff" />
<rect x="57" y="124" width="1" height="9" fill="#00ff00" />
<rect x="55" y="132" width="5" height="26" fill="#00ff00" />
<rect x="56" y="133" width="3" height="24" fill="#000000" />
<rect x="65" y="140" width="1" height="8" fill="#00ff00" />
<rect x="63" y="134" width="5" height="7" fill="#00ff00" />
<rect x="64" y="135" width="3" height="5" fill="#ffffff" />
<rect x="73" y="124" width="1" height="14" fill="#00ff00" />
<rect x="73" y="137" width="1" height="4" fill="#00ff00" />
<rect x="71" y="137" width="5" height="1" fill="#00ff00" />
<rect x="81" y="128" width="1" height="5" fill="#00ff00" />
<rect x="81" y="160" width="1" height="4" fill="#00ff00" />
<rect x="79" y="132" width="5" height="29" fill="#00ff00" />
<rect x="80" y="133" width="3" height="27" fill="#ffffff" />
<rect x="89" y="134" width="1" height="15" fill="#00ff00" />
<rect x="87" y="148" width="5" height="9" fill="#00ff00" />
<rect x="88" y="149" width="3" height="7" fill="#000000" />
<rect x="97" y="140" width="1" height="5" fill="#00ff00" />
<rect x="95" y="144" width="5" height="33" fill="#00ff00" />
<rect x="96" y="145" width="3" height="31" fill="#ffffff" />
<rect x="105" y="153" width="1" height="6" fill="#00ff00" />
<rect x="103" y="158" width="5" height="29" fill="#00ff00" />
<rect x="104" y="159" width="3" height="27" fill="#000000" />
<rect x="113" y="163" width="1" height="14" fill="#00ff00" />
<rect x="111" y="161" width="5" height="3" fill="#00ff00" />
<rect x="112" y="162" width="3" height="1" fill="#ffffff" />
<rect x="121" y="157" width="1" height="5" fill="#00ff00" />
<rect x="121" y="165" width="1" height="9" fill="#00ff00" />
<rect x="119" y="161" width="5" height="5" fill="#00ff00" />
<rect x="120" y="162" width="3" height="3" fill="#000000" />
<rect x="129" y="160" width="1" height="10" fill="#00ff00" />
<rect x="127" y="158" width="5" height="3" fill="#00ff00" />
<rect x="128" y="159" width="3" height="1" fill="#ffffff" />
<rect x="137" y="147" width="1" height="8" fill="#00ff00" />
<rect x="137" y="157" width="1" height="4" fill="#00ff00" />
<rect x="135" y="154" width="5" height="4" fill="#00ff00" />
<rect x="136" y="155" width="3" height="2" fill="#000000" />
<rect x="145" y="144" width="1" height="15" fill="#00ff00" />
<rect x="145" y="163" width="1" height="4" fill="#00ff00" />
<rect x="143" y="158" width="5" height="6" fill="#00ff00" />
<rect x="144" y="159" width="3" height="4" fill="#ffffff" />
<rect x="153" y="163" width="1" height="4" fill="#00ff00" />
<rect x="151" y="166" width="5" height="21" fill="#00ff00" />
<rect x="152" y="167" width="3" height="19" fill="#ffffff" />
<rect x="161" y="179" width="1" height="5" fill="#00ff00" />
<rect x="161" y="205" width="1" height="11" fill="#00ff00" />
<rect x="159" y="183" width="5" height="23" fill="#00ff00" />
<rect x="160" y="184" width="3" height="21" fill="#ffffff" />
<rect x="169" y="224" width="1" height="17" fill="#00ff00" />
<rect x="167" y="208" width="5" height="17" fill="#00ff00" />
<rect x="168" y="209" width="3" height="15" fill="#ffffff" />
<rect x="177" y="218" width="1" height="10" fill="#00ff00" />
<rect x="177" y="227" width="1" height="11" fill="#00ff00" />
<rect x="175" y="227" width="5" height="1" fill="#00ff00" />
<rect x="185" y="208" width="1" height="18" fill="#00ff00" />
<rect x="183" y="225" width="5" height="7" fill="#00ff00" />
<rect x="184" y="226" width="3" height="5" fill="#000000" />
<rect x="193" y="226" width="1" height="25" fill="#00ff00" />
<rect x="191" y="222" width="5" height="5" fill="#00ff00" />
<rect x="192" y="223" width="3" height="3" fill="#000000" />
<rect x="201" y="215" width="1" height="7" fill="#00ff00" />
<rect x="201" y="224" width="1" height="11" fill="#00ff00" />
<rect x="199" y="221" width="5" height="4" fill="#00ff00" />
<rect x="200" y="222" width="3" height="2" fill="#000000" />
<rect x="207" y="225" width="5" height="13" fill="#00ff00" />
<rect x="208" y="226" width="3" height="11" fill="#ffffff" />
<rect x="217" y="253" width="1" height="14" fill="#00ff00" />
<rect x="215" y="224" width="5" height="30" fill="#00ff00" />
<rect x="216" y="225" width="3" height="28" fill="#000000" />
<rect x="225" y="260" width="1" height="26" fill="#00ff00" />
<rect x="223" y="218" width="5" height="43" fill="#00ff00" />
<rect x="224" y="219" width="3" height="41" fill="#ffffff" />
<rect x="233" y="253" width="1" height="11" fill="#00ff00" />
<rect x="233" y="314" width="1" height="17" fill="#00ff00" />
<rect x="231" y="263" width="5" height="52" fill="#00ff00" />
<rect x="232" y="264" width="3" height="50" fill="#ffffff" />
<rect x="241" y="308" width="1" height="4" fill="#00ff00" />
<rect x="241" y="343" width="1" height="5" fill="#00ff00" />
<rect x="239" y="311" width="5" height="33" fill="#00ff00" />
<rect x="240" y="312" width="3" height="31" fill="#ffffff" />
<rect x="249" y="298" width="1" height="8" fill="#00ff00" />
<rect x="249" y="340" width="1" height="4" fill="#00ff00" />
<rect x="247" y="305" width="5" height="36" fill="#00ff00" />
<rect x="248" y="306" width="3" height="34" fill="#000000" />
<rect x="257" y="301" width="1" height="8" fill="#00ff00" />
<rect x="257" y="318" width="1" height="7" fill="#00ff00" />
<rect x="255" y="308" width="5" height="11" fill="#00ff00" />
<rect x="256" y="309" width="3" height="9" fill="#ffffff" />
<rect x="265" y="302" width="1" height="13" fill="#00ff00" />
<rect x="265" y="337" width="1" height="7" fill="#00ff00" />
<rect x="263" y="314" width="5" height="24" fill="#00ff00" />
<rect x="264" y="315" width="3" height="22" fill="#ffffff" />
<rect x="273" y="319" width="1" height="9" fill="#00ff00" />
<rect x="271" y="327" width="5" height="8" fill="#00ff00" />
<rect x="272" y="328" width="3" height="6" fill="#000000" />
<rect x="281" y="305" width="1" height="10" fill="#00ff00" />
<rect x="281" y="323" width="1" height="8" fill="#00ff00" />
<rect x="279" y="314" width="5" height="10" fill="#00ff00" />
<rect x="280" y="315" width="3" height="8" fill="#000000" />
<rect x="289" y="305" width="1" height="14" fill="#00ff00" />
<rect x="289" y="356" width="1" height="11" fill="#00ff00" />
<rect x="287" y="318" width="5" height="39" fill="#00ff00" />
<rect x="288" y="319" width="3" height="37" fill="#ffffff" />
<rect x="297" y="359" width="1" height="8" fill="#00ff00" />
<rect x="295" y="327" width="5" height="33" fill="#00ff00" />
<rect x="296" y="328" width="3" height="31" fill="#000000" />
<rect x="305" y="379" width="1" height="10" fill="#00ff00" />
<rect x="303" y="330" width="5" height="50" fill="#00ff00" />
<rect x="304" y="331" width="3" height="48" fill="#ffffff" />
<rect x="311" y="350" width="5" height="27" fill="#00ff00" />
<rect x="312" y="351" width="3" height="25" fill="#000000" />
<rect x="321" y="347" width="1" height="7" fill="#00ff00" />
<rect x="319" y="324" width="5" height="24" fill="#00ff00" />
<rect x="320" y="325" width="3" height="22" fill="#000000" />
<rect x="329" y="321" width="1" height="14" fill="#00ff00" />
<rect x="327" y="308" width="5" height="14" fill="#00ff00" />
<rect x="328" y="309" width="3" height="12" fill="#000000" />
<rect x="337" y="285" width="1" height="17" fill="#00ff00" />
<rect x="337" y="311" width="1" height="14" fill="#00ff00" />
<rect x="335" y="301" width="5" height="11" fill="#00ff00" />
<rect x="336" y="302" width="3" height="9" fill="#ffffff" />
<rect x="345" y="298" width="1" height="17" fill="#00ff00" />
<rect x="345" y="314" width="1" height="8" fill="#00ff00" />
<rect x="343" y="314" width="5" height="1" fill="#00ff00" />
<rect x="353" y="311" width="1" height="8" fill="#00ff00" />
<rect x="353" y="318" width="1" height="4" fill="#00ff00" />
<rect x="351" y="318" width="5" height="1" fill="#00ff00" />
<rect x="361" y="305" width="1" height="11" fill="#00ff00" />
<rect x="361" y="330" width="1" height="8" fill="#00ff00" />
<rect x="359" y="315" width="5" height="16" fill="#00ff00" />
<rect x="360" y="316" width="3" height="14" fill="#ffffff" />
<rect x="369" y="301" width="1" height="27" fill="#00ff00" />
<rect x="369" y="334" width="1" height="4" fill="#00ff00" />
<rect x="367" y="327" width="5" height="8" fill="#00ff00" />
<rect x="368" y="328" width="3" height="6" fill="#000000" />
<rect x="377" y="292" width="1" height="11" fill="#00ff00" />
<rect x="377" y="330" width="1" height="8" fill="#00ff00" />
<rect x="375" y="302" width="5" height="29" fill="#00ff00" />
<rect x="376" y="303" width="3" height="27" fill="#000000" />
<rect x="385" y="292" width="1" height="15" fill="#00ff00" />
<rect x="385" y="308" width="1" height="7" fill="#00ff00" />
<rect x="383" y="306" width="5" height="3" fill="#00ff00" />
<rect x="384" y="307" width="3" height="1" fill="#ffffff" />
<rect x="393" y="318" width="1" height="4" fill="#00ff00" />
<rect x="391" y="306" width="5" height="13" fill="#00ff00" />
<rect x="392" y="307" width="3" height="11" fill="#ffffff" />
<rect x="401" y="298" width="1" height="11" fill="#00ff00" />
<rect x="401" y="314" width="1" height="5" fill="#00ff00" />
<rect x="399" y="308" width="5" height="7" fill="#00ff00" />
<rect x="400" y="309" width="3" height="5" fill="#000000" />
<rect x="409" y="289" width="1" height="10" fill="#00ff00" />
<rect x="409" y="311" width="1" height="8" fill="#00ff00" />
<rect x="407" y="298" width="5" height="14" fill="#00ff00" />
<rect x="408" y="299" width="3" height="12" fill="#000000" />
<rect x="417" y="285" width="1" height="11" fill="#00ff00" />
<rect x="417" y="301" width="1" height="18" fill="#00ff00" />
<rect x="415" y="295" width="5" height="7" fill="#00ff00" />
<rect x="416" y="296" width="3" height="5" fill="#000000" />
<rect x="425" y="282" width="1" height="5" fill="#00ff00" />
<rect x="425" y="289" width="1" height="7" fill="#00ff00" />
<rect x="423" y="286" width="5" height="4" fill="#00ff00" />
<rect x="424" y="287" width="3" height="2" fill="#ffffff" />
<rect x="433" y="266" width="1" height="14" fill="#00ff00" />
<rect x="431" y="279" width="5" height="14" fill="#00ff00" />
<rect x="432" y="280" width="3" height="12" fill="#ffffff" />
<rect x="441" y="285" width="1" height="5" fill="#00ff00" />
<rect x="441" y="298" width="1" height="8" fill="#00ff00" />
<rect x="439" y="289" width="5" height="10" fill="#00ff00" />
<rect x="440" y="290" width="3" height="8" fill="#ffffff" />
<rect x="449" y="311" width="1" height="4" fill="#00ff00" />
<rect x="447" y="295" width="5" height="17" fill="#00ff00" />
<rect x="448" y="296" width="3" height="15" fill="#ffffff" />
<rect x="457" y="301" width="1" height="8" fill="#00ff00" />
<rect x="455" y="308" width="5" height="7" fill="#00ff00" />
<rect x="456" y="309" width="3" height="5" fill="#000000" />
<rect x="463" y="306" width="5" height="22" fill="#00ff00" />
<rect x="464" y="307" width="3" height="20" fill="#ffffff" />
<rect x="473" y="308" width="1" height="5" fill="#00ff00" />
<rect x="471" y="312" width="5" height="19" fill="#00ff00" />
<rect x="472" y="313" width="3" height="17" fill="#000000" />
<rect x="481" y="301" width="1" height="8" fill="#00ff00" />
<rect x="481" y="314" width="1" height="5" fill="#00ff00" />
<rect x="479" y="308" width="5" height="7" fill="#00ff00" />
<rect x="480" y="309" width="3" height="5" fill="#000000" />
<rect x="489" y="285" width="1" height="22" fill="#00ff00" />
<rect x="489" y="347" width="1" height="4" fill="#00ff00" />
<rect x="487" y="306" width="5" height="42" fill="#00ff00" />
<rect x="488" y="307" width="3" height="40" fill="#ffffff" />
<rect x="497" y="311" width="1" height="8" fill="#00ff00" />
<rect x="497" y="343" width="1" height="5" fill="#00ff00" />
<rect x="495" y="318" width="5" height="26" fill="#00ff00" />
<rect x="496" y="319" width="3" height="24" fill="#000000" />
<rect x="505" y="292" width="1" height="21" fill="#00ff00" />
<rect x="503" y="312" width="5" height="13" fill="#00ff00" />
<rect x="504" y="313" width="3" height="11" fill="#000000" />
<rect x="513" y="308" width="1" height="4" fill="#00ff00" />
<rect x="511" y="272" width="5" height="37" fill="#00ff00" />
<rect x="512" y="273" width="3" height="35" fill="#000000" />
<rect x="521" y="263" width="1" height="7" fill="#00ff00" />
<rect x="521" y="276" width="1" height="17" fill="#00ff00" />
<rect x="519" y="269" width="5" height="8" fill="#00ff00" />
<rect x="520" y="270" width="3" height="6" fill="#000000" />
<rect x="529" y="266" width="1" height="20" fill="#00ff00" />
<rect x="527" y="260" width="5" height="7" fill="#00ff00" />
<rect x="528" y="261" width="3" height="5" fill="#000000" />
<rect x="537" y="256" width="1" height="8" fill="#00ff00" />
<rect x="537" y="266" width="1" height="4" fill="#00ff00" />
<rect x="535" y="263" width="5" height="4" fill="#00ff00" />
<rect x="536" y="264" width="3" height="2" fill="#ffffff" />
<rect x="545" y="244" width="1" height="7" fill="#00ff00" />
<rect x="543" y="250" width="5" height="14" fill="#00ff00" />
<rect x="544" y="251" width="3" height="12" fill="#000000" />
<rect x="553" y="256" width="1" height="11" fill="#00ff00" />
<rect x="551" y="254" width="5" height="3" fill="#00ff00" />
<rect x="552" y="255" width="3" height="1" fill="#ffffff" />
<rect x="561" y="240" width="1" height="14" fill="#00ff00" />
<rect x="561" y="260" width="1" height="7" fill="#00ff00" />
<rect x="559" y="253" width="5" height="8" fill="#00ff00" />
<rect x="560" y="254" width="3" height="6" fill="#ffffff" />
<rect x="569" y="263" width="1" height="4" fill="#00ff00" />
<rect x="567" y="237" width="5" height="27" fill="#00ff00" />
<rect x="568" y="238" width="3" height="25" fill="#000000" />
<rect x="577" y="272" width="1" height="5" fill="#00ff00" />
<rect x="575" y="240" width="5" height="33" fill="#00ff00" />
<rect x="576" y="241" width="3" height="31" fill="#ffffff" />
<rect x="585" y="263" width="1" height="7" fill="#00ff00" />
<rect x="583" y="269" width="5" height="21" fill="#00ff00" />
<rect x="584" y="270" width="3" height="19" fill="#ffffff" />
<rect x="593" y="273" width="1" height="5" fill="#00ff00" />
<rect x="591" y="277" width="5" height="16" fill="#00ff00" />
<rect x="592" y="278" width="3" height="14" fill="#000000" />
<rect x="601" y="218" width="1" height="11" fill="#00ff00" />
<rect x="599" y="228" width="5" height="45" fill="#00ff00" />
<rect x="600" y="229" width="3" height="43" fill="#000000" />
<rect x="609" y="202" width="1" height="17" fill="#00ff00" />
<rect x="609" y="231" width="1" height="7" fill="#00ff00" />
<rect x="607" y="218" width="5" height="14" fill="#00ff00" />
<rect x="608" y="219" width="3" height="12" fill="#000000" />
<rect x="617" y="202" width="1" height="14" fill="#00ff00" />
<rect x="617" y="218" width="1" height="10" fill="#00ff00" />
<rect x="615" y="215" width="5" height="4" fill="#00ff00" />
<rect x="616" y="216" width="3" height="2" fill="#ffffff" />
<rect x="625" y="215" width="1" height="10" fill="#00ff00" />
<rect x="623" y="202" width="5" height="14" fill="#00ff00" />
<rect x="624" y="203" width="3" height="12" fill="#000000" />
<rect x="633" y="195" width="1" height="5" fill="#00ff00" />
<rect x="631" y="199" width="5" height="29" fill="#00ff00" />
<rect x="632" y="200" width="3" height="27" fill="#ffffff" />
<rect x="641" y="205" width="1" height="14" fill="#00ff00" />
<rect x="641" y="224" width="1" height="4" fill="#00ff00" />
<rect x="639" y="218" width="5" height="7" fill="#00ff00" />
<rect x="640" y="219" width="3" height="5" fill="#000000" />
<rect x="649" y="198" width="1" height="5" fill="#00ff00" />
<rect x="649" y="215" width="1" height="4" fill="#00ff00" />
<rect x="647" y="202" width="5" height="14" fill="#00ff00" />
<rect x="648" y="203" width="3" height="12" fill="#000000" />
<rect x="657" y="186" width="1" height="13" fill="#00ff00" />
<rect x="657" y="198" width="1" height="5" fill="#00ff00" />
<rect x="655" y="198" width="5" height="1" fill="#00ff00" />
<rect x="665" y="224" width="1" height="4" fill="#00ff00" />
<rect x="663" y="202" width="5" height="23" fill="#00ff00" />
<rect x="664" y="203" width="3" height="21" fill="#ffffff" />
<rect x="673" y="244" width="1" height="7" fill="#00ff00" />
<rect x="671" y="227" width="5" height="18" fill="#00ff00" />
<rect x="672" y="228" width="3" height="16" fill="#ffffff" />
<rect x="681" y="231" width="1" height="10" fill="#00ff00" />
<rect x="679" y="240" width="5" height="8" fill="#00ff00" />
<rect x="680" y="241" width="3" height="6" fill="#000000" />
<rect x="689" y="224" width="1" height="5" fill="#00ff00" />
<rect x="687" y="228" width="5" height="10" fill="#00ff00" />
<rect x="688" y="229" width="3" height="8" fill="#000000" />
<rect x="697" y="218" width="1" height="7" fill="#00ff00" />
<rect x="697" y="231" width="1" height="4" fill="#00ff00" />
<rect x="695" y="224" width="5" height="8" fill="#00ff00" />
<rect x="696" y="225" width="3" height="6" fill="#ffffff" />
<rect x="705" y="231" width="1" height="4" fill="#00ff00" />
<rect x="705" y="234" width="1" height="4" fill="#00ff00" />
<rect x="703" y="234" width="5" height="1" fill="#00ff00" />
<rect x="713" y="231" width="1" height="14" fill="#00ff00" />
<rect x="711" y="222" width="5" height="10" fill="#00ff00" />
<rect x="712" y="223" width="3" height="8" fill="#000000" />
<rect x="721" y="221" width="1" height="4" fill="#00ff00" />
<rect x="719" y="224" width="5" height="11" fill="#00ff00" />
<rect x="720" y="225" width="3" height="9" fill="#ffffff" />
<rect x="729" y="205" width="1" height="4" fill="#00ff00" />
<rect x="727" y="208" width="5" height="30" fill="#00ff00" />
<rect x="728" y="209" width="3" height="28" fill="#000000" />
<rect x="737" y="190" width="1" height="3" fill="#00ff00" />
<rect x="737" y="205" width="1" height="4" fill="#00ff00" />
<rect x="735" y="192" width="5" height="14" fill="#00ff00" />
<rect x="736" y="193" width="3" height="12" fill="#000000" />
<rect x="745" y="195" width="1" height="8" fill="#00ff00" />
<rect x="743" y="190" width="5" height="6" fill="#00ff00" />
<rect x="744" y="191" width="3" height="4" fill="#000000" />
<rect x="753" y="186" width="1" height="7" fill="#00ff00" />
<rect x="751" y="174" width="5" height="13" fill="#00ff00" />
<rect x="752" y="175" width="3" height="11" fill="#000000" />
<rect x="761" y="176" width="1" height="4" fill="#00ff00" />
<rect x="759" y="174" width="5" height="3" fill="#00ff00" />
<rect x="760" y="175" width="3" height="1" fill="#000000" />
<rect x="769" y="189" width="1" height="10" fill="#00ff00" />
<rect x="767" y="170" width="5" height="20" fill="#00ff00" />
<rect x="768" y="171" width="3" height="18" fill="#ffffff" />
<rect x="777" y="182" width="1" height="9" fill="#00ff00" />
<rect x="777" y="192" width="1" height="14" fill="#00ff00" />
<rect x="775" y="190" width="5" height="3" fill="#00ff00" />
<rect x="776" y="191" width="3" height="1" fill="#000000" />
<rect x="785" y="179" width="1" height="14" fill="#00ff00" />
<rect x="785" y="192" width="1" height="4" fill="#00ff00" />
<rect x="783" y="192" width="5" height="1" fill="#00ff00" />
<rect x="793" y="179" width="1" height="8" fill="#00ff00" />
<rect x="793" y="186" width="1" height="7" fill="#00ff00" />
<rect x="791" y="186" width="5" height="1" fill="#00ff00" />
<rect x="801" y="186" width="1" height="5" fill="#00ff00" />
<rect x="801" y="192" width="1" height="7" fill="#00ff00" />
<rect x="799" y="190" width="5" height="3" fill="#00ff00" />
<rect x="800" y="191" width="3" height="1" fill="#ffffff" />
<rect x="809" y="144" width="1" height="7" fill="#00ff00" />
<rect x="807" y="150" width="5" height="40" fill="#00ff00" />
<rect x="808" y="151" width="3" height="38" fill="#000000" />
<rect x="817" y="166" width="1" height="8" fill="#00ff00" />
<rect x="815" y="147" width="5" height="20" fill="#00ff00" />
<rect x="816" y="148" width="3" height="18" fill="#ffffff" />
<rect x="825" y="166" width="1" height="4" fill="#00ff00" />
<rect x="823" y="169" width="5" height="1" fill="#00ff00" />
<rect x="833" y="176" width="1" height="14" fill="#00ff00" />
<rect x="831" y="173" width="5" height="4" fill="#00ff00" />
<rect x="832" y="174" width="3" height="2" fill="#ffffff" />
<rect x="841" y="179" width="1" height="4" fill="#00ff00" />
<rect x="839" y="170" width="5" height="10" fill="#00ff00" />
<rect x="840" y="171" width="3" height="8" fill="#000000" />
<rect x="849" y="166" width="1" height="5" fill="#00ff00" />
<rect x="849" y="173" width="1" height="10" fill="#00ff00" />
<rect x="847" y="170" width="5" height="4" fill="#00ff00" />
<rect x="848" y="171" width="3" height="2" fill="#000000" />
<rect x="857" y="137" width="1" height="18" fill="#00ff00" />
<rect x="855" y="154" width="5" height="10" fill="#00ff00" />
<rect x="856" y="155" width="3" height="8" fill="#000000" />
<rect x="865" y="150" width="1" height="8" fill="#00ff00" />
<rect x="863" y="157" width="5" height="13" fill="#00ff00" />
<rect x="864" y="158" width="3" height="11" fill="#ffffff" />
<rect x="871" y="166" width="5" height="8" fill="#00ff00" />
<rect x="872" y="167" width="3" height="6" fill="#ffffff" />
<rect x="879" y="170" width="5" height="13" fill="#00ff00" />
<rect x="880" y="171" width="3" height="11" fill="#ffffff" />
<rect x="889" y="198" width="1" height="14" fill="#00ff00" />
<rect x="887" y="179" width="5" height="20" fill="#00ff00" />
<rect x="888" y="180" width="3" height="18" fill="#ffffff" />
<rect x="897" y="182" width="1" height="5" fill="#00ff00" />
<rect x="895" y="186" width="5" height="17" fill="#00ff00" />
<rect x="896" y="187" width="3" height="15" fill="#000000" />
<rect x="903" y="182" width="5" height="8" fill="#00ff00" />
<rect x="904" y="183" width="3" height="6" fill="#ffffff" />
<rect x="913" y="189" width="1" height="4" fill="#00ff00" />
<rect x="913" y="192" width="1" height="4" fill="#00ff00" />
<rect x="911" y="192" width="5" height="1" fill="#00ff00" />
<rect x="921" y="192" width="1" height="3" fill="#00ff00" />
<rect x="921" y="194" width="1" height="15" fill="#00ff00" />
<rect x="919" y="194" width="5" height="1" fill="#00ff00" />
<rect x="927" y="199" width="5" height="7" fill="#00ff00" />
<rect x="928" y="200" width="3" height="5" fill="#ffffff" />
<rect x="935" y="202" width="5" height="23" fill="#00ff00" />
<rect x="936" y="203" width="3" height="21" fill="#ffffff" />
<rect x="945" y="218" width="1" height="4" fill="#00ff00" />
<rect x="945" y="224" width="1" height="8" fill="#00ff00" />
<rect x="943" y="221" width="5" height="4" fill="#00ff00" />
<rect x="944" y="222" width="3" height="2" fill="#ffffff" />
<rect x="953" y="224" width="1" height="4" fill="#00ff00" />
<rect x="953" y="240" width="1" height="5" fill="#00ff00" />
<rect x="951" y="227" width="5" height="14" fill="#00ff00" />
<rect x="952" y="228" width="3" height="12" fill="#ffffff" />
<rect x="961" y="231" width="1" height="4" fill="#00ff00" />
<rect x="961" y="237" width="1" height="8" fill="#00ff00" />
<rect x="959" y="234" width="5" height="4" fill="#00ff00" />
<rect x="960" y="235" width="3" height="2" fill="#000000" />
<rect x="969" y="208" width="1" height="14" fill="#00ff00" />
<rect x="967" y="221" width="5" height="11" fill="#00ff00" />
<rect x="968" y="222" width="3" height="9" fill="#000000" />
<rect x="977" y="221" width="1" height="4" fill="#00ff00" />
<rect x="975" y="224" width="5" height="11" fill="#00ff00" />
<rect x="976" y="225" width="3" height="9" fill="#ffffff" />
<rect x="985" y="215" width="1" height="10" fill="#00ff00" />
<rect x="983" y="224" width="5" height="8" fill="#00ff00" />
<rect x="984" y="225" width="3" height="6" fill="#000000" />
<path d="M784.5,82 L794.5,82 L789.5,87.5 Z" fill="#778899"/>
</g></svg>
<rect x="12" y="83" width="186" height="11" fill="#000" />
<text x="12.2" y="92.5" font-family="Liberation Sans" font-size="10" fill="#fff" font-weight="normal" textLength="56.9" lengthAdjust="spacingAndGlyphs">EURUSD,M1</text>
<text x="74.2" y="92.5" font-family="Liberation Sans" font-size="10" fill="#fff" font-weight="normal" textLength="28.6" lengthAdjust="spacingAndGlyphs">1.3920</text>
<text x="104.9" y="92.5" font-family="Liberation Sans" font-size="10" fill="#fff" font-weight="normal" textLength="28.4" lengthAdjust="spacingAndGlyphs">1.3926</text>
<text x="136.2" y="92.5" font-family="Liberation Sans" font-size="10" fill="#fff" font-weight="normal" textLength="28.3" lengthAdjust="spacingAndGlyphs">1.3920</text>
<text x="167.4" y="92.5" font-family="Liberation Sans" font-size="10" fill="#fff" font-weight="normal" textLength="28.3" lengthAdjust="spacingAndGlyphs">1.3926</text>
<rect x="987" y="99" width="2" height="1" fill="#ffffff" />
<text x="992.2" y="101.5" font-family="Liberation Sans" font-size="10" fill="#fff" font-weight="normal" textLength="28.9" lengthAdjust="spacingAndGlyphs">1.3945</text>
<rect x="987" y="131" width="2" height="1" fill="#ffffff" />
<text x="992.2" y="133.5" font-family="Liberation Sans" font-size="10" fill="#fff" font-weight="normal" textLength="28.9" lengthAdjust="spacingAndGlyphs">1.3935</text>
<rect x="987" y="195" width="2" height="1" fill="#ffffff" />
<text x="992.2" y="197.5" font-family="Liberation Sans" font-size="10" fill="#fff" font-weight="normal" textLength="28.9" lengthAdjust="spacingAndGlyphs">1.3915</text>
<rect x="987" y="227" width="2" height="1" fill="#ffffff" />
<text x="992.2" y="229.5" font-family="Liberation Sans" font-size="10" fill="#fff" font-weight="normal" textLength="28.9" lengthAdjust="spacingAndGlyphs">1.3905</text>
<rect x="987" y="259" width="2" height="1" fill="#ffffff" />
<text x="992.2" y="261.5" font-family="Liberation Sans" font-size="10" fill="#fff" font-weight="normal" textLength="28.9" lengthAdjust="spacingAndGlyphs">1.3895</text>
<rect x="987" y="291" width="2" height="1" fill="#ffffff" />
<text x="992.2" y="293.5" font-family="Liberation Sans" font-size="10" fill="#fff" font-weight="normal" textLength="28.9" lengthAdjust="spacingAndGlyphs">1.3885</text>
<rect x="987" y="323" width="2" height="1" fill="#ffffff" />
<text x="992.2" y="325.5" font-family="Liberation Sans" font-size="10" fill="#fff" font-weight="normal" textLength="28.9" lengthAdjust="spacingAndGlyphs">1.3875</text>
<rect x="987" y="355" width="2" height="1" fill="#ffffff" />
<text x="992.2" y="357.5" font-family="Liberation Sans" font-size="10" fill="#fff" font-weight="normal" textLength="28.9" lengthAdjust="spacingAndGlyphs">1.3865</text>
<rect x="987" y="387" width="2" height="1" fill="#ffffff" />
<text x="992.2" y="389.5" font-family="Liberation Sans" font-size="10" fill="#fff" font-weight="normal" textLength="28.9" lengthAdjust="spacingAndGlyphs">1.3855</text>
<rect x="989" y="147" width="34" height="7" fill="#ff0000" />
<text x="992.3" y="156.3" font-family="Liberation Sans" font-size="10" fill="#000" font-weight="normal" textLength="27.5" lengthAdjust="spacingAndGlyphs">1.3928</text>
<rect x="989" y="154" width="34" height="11" fill="#ffffff" />
<text x="992.3" y="163" font-family="Liberation Sans" font-size="10" fill="#000" font-weight="bold" textLength="27.5" lengthAdjust="spacingAndGlyphs">1.3926</text>
<rect x="987" y="154" width="1" height="9" fill="#000" />
<rect x="986" y="163" width="3" height="1" fill="#ffffff" />
<rect x="989" y="165" width="1" height="1" fill="#ffffff" />
<rect x="991" y="165" width="1" height="1" fill="#ffffff" />
<rect x="993" y="165" width="1" height="1" fill="#ffffff" />
<rect x="995" y="165" width="1" height="1" fill="#ffffff" />
<rect x="997" y="165" width="1" height="1" fill="#ffffff" />
<rect x="999" y="165" width="1" height="1" fill="#ffffff" />
<rect x="1001" y="165" width="1" height="1" fill="#ffffff" />
<rect x="1003" y="165" width="1" height="1" fill="#ffffff" />
<rect x="1005" y="165" width="1" height="1" fill="#ffffff" />
<rect x="1007" y="165" width="1" height="1" fill="#ffffff" />
<rect x="1009" y="165" width="1" height="1" fill="#ffffff" />
<rect x="1011" y="165" width="1" height="1" fill="#ffffff" />
<rect x="1013" y="165" width="1" height="1" fill="#ffffff" />
<rect x="1015" y="165" width="1" height="1" fill="#ffffff" />
<rect x="1017" y="165" width="1" height="1" fill="#ffffff" />
<rect x="1019" y="165" width="1" height="1" fill="#ffffff" />
<rect x="986" y="153" width="2" height="1" fill="#ff0000" />
<rect x="986" y="160" width="2" height="1" fill="#778899" />
<svg x="9" y="408" width="977" height="146" overflow="hidden"><g transform="translate(-9,-408)">
<line x1="10" y1="445.5" x2="986" y2="445.5" stroke="#c8c8c8" stroke-width="1" stroke-dasharray="3,3" shape-rendering="crispEdges"/>
<line x1="10" y1="481.5" x2="986" y2="481.5" stroke="#c8c8c8" stroke-width="1" stroke-dasharray="3,3" shape-rendering="crispEdges"/>
<line x1="10" y1="517.5" x2="986" y2="517.5" stroke="#c8c8c8" stroke-width="1" stroke-dasharray="3,3" shape-rendering="crispEdges"/>
<polyline points="9.00,485.60 20.10,486.00 33.30,489.00 41.40,487.00 49.50,488.00 58.60,485.60 72.80,487.00 89.00,486.60 97.10,488.40 113.30,487.00 147.70,487.00 165.90,492.40 209.10,493.10 217.20,492.00 225.30,494.10 241.50,499.70 249.60,497.10 265.80,498.10 281.00,496.50 290.10,498.10 298.20,496.50 305.30,499.10 321.50,494.10 331.60,492.00 353.80,493.10 361.90,494.10 378.10,491.60 395.00,492.40 415.20,490.40 439.50,491.60 465.90,491.60 490.10,492.00 512.40,487.00 536.70,486.40 569.10,484.60 585.30,488.00 595.00,486.00 604.20,482.50 622.40,481.50 634.50,482.90 658.80,481.50 673.00,484.00 691.20,482.90 719.60,482.90 731.70,480.90 751.90,478.90 762.10,478.30 772.20,480.30 790.00,479.90 802.20,479.90 810.30,477.50 826.50,478.90 856.90,477.50 875.10,479.90 899.40,480.30 931.70,481.50 937.80,482.90 958.10,484.00 985.00,482.90" fill="none" stroke="#ff00ff" stroke-width="1" shape-rendering="crispEdges"/>
<polyline points="9.00,497.10 18.10,497.70 26.20,500.50 33.30,509.30 41.40,500.10 49.50,504.20 57.60,490.40 65.70,493.70 73.80,491.00 81.90,499.10 90.00,493.00 98.10,501.80 106.20,493.00 114.30,495.10 123.40,493.70 131.50,493.70 139.60,490.40 147.70,494.00 155.80,502.20 163.90,508.20 172.00,511.30 180.10,512.30 186.10,509.90 194.20,508.20 202.30,509.30 209.10,513.30 217.20,504.20 225.30,514.30 233.40,523.40 241.50,527.50 249.60,510.30 257.70,511.30 265.80,515.30 273.90,511.30 282.00,505.20 290.10,513.30 298.20,502.60 306.30,511.30 314.40,500.10 322.50,494.00 330.60,489.60 338.70,491.00 354.90,491.60 361.90,495.10 370.00,493.00 378.10,485.60 386.20,486.40 394.30,489.00 402.10,486.00 410.20,481.90 425.40,479.50 433.50,480.90 441.60,484.00 449.70,488.00 457.80,486.00 465.90,493.70 474.00,486.00 482.00,485.60 489.10,498.10 497.20,487.00 505.30,481.90 513.40,470.80 521.50,470.20 529.60,467.80 537.70,469.80 545.80,465.30 553.90,468.20 561.00,469.40 569.10,462.70 577.20,476.30 585.30,482.90 594.00,475.90 602.10,465.30 609.20,462.70 617.30,462.70 625.40,458.60 633.50,469.40 641.60,465.30 649.70,462.70 657.80,461.70 665.90,473.80 674.00,479.50 682.10,476.90 690.20,474.80 698.30,475.40 705.40,476.30 713.50,472.20 721.60,476.90 729.70,467.80 737.80,464.10 745.90,463.30 754.00,458.60 762.10,458.60 769.10,467.30 782.30,468.20 793.10,466.70 801.20,469.80 809.30,456.60 817.40,464.10 825.50,465.70 833.60,469.40 841.70,466.70 849.80,467.30 856.90,461.70 864.90,469.80 873.00,471.80 881.10,476.90 889.20,483.50 897.30,479.50 905.40,480.30 913.50,481.90 921.60,484.00 929.70,488.00 937.80,497.10 945.90,497.10 953.60,504.20 962.10,498.10 969.20,491.60 977.30,496.10 985.00,491.00" fill="none" stroke="#00ff00" stroke-width="1" shape-rendering="crispEdges"/>
<polyline points="9.00,497.10 16.10,504.20 24.20,514.30 33.30,528.50 42.40,537.60 50.50,541.00 57.60,537.60 66.70,528.50 76.80,515.30 89.00,496.10 97.10,489.00 107.20,485.60 117.30,486.40 129.50,492.40 141.60,493.70 153.70,495.10 167.90,500.10 180.10,511.30 190.20,522.00 200.30,526.00 209.10,528.10 217.20,524.40 226.30,520.40 236.40,518.40 248.60,518.00 256.70,520.40 268.80,525.40 276.90,527.50 287.00,527.50 297.20,528.10 309.30,525.40 321.50,519.40 331.60,504.20 341.70,488.00 351.80,467.80 361.90,455.60 372.10,453.00 382.20,453.60 392.30,459.70 402.10,465.30 417.30,465.30 425.40,463.30 441.60,454.60 447.60,455.20 457.80,459.70 465.90,471.80 474.00,490.00 482.00,503.80 490.10,514.30 497.20,520.80 505.30,520.40 520.50,503.20 528.60,488.00 536.70,461.70 545.80,444.50 554.90,430.30 563.00,422.80 569.10,421.20 577.20,423.60 585.30,433.30 598.10,446.50 608.20,460.70 616.30,467.80 624.40,464.70 638.60,451.60 648.70,441.40 658.80,435.00 666.90,436.40 677.00,444.50 687.20,458.60 695.30,474.80 703.40,492.00 711.50,503.20 721.60,510.70 729.70,509.30 739.80,500.10 749.90,481.90 760.00,458.60 768.10,438.40 778.30,425.20 784.30,424.20 794.10,427.30 802.20,437.40 818.40,451.60 834.60,460.10 842.70,460.70 850.80,464.70 867.00,470.80 879.10,475.90 887.20,482.90 895.30,492.00 903.40,500.10 913.50,509.30 923.70,513.90 931.70,515.90 947.90,521.40 960.10,527.50 968.20,530.90 976.30,532.90 985.00,530.90" fill="none" stroke="#ffff00" stroke-width="1" shape-rendering="crispEdges"/>
<polyline points="9.00,516.00 16.10,532.50 25.20,546.30 33.30,546.30 49.50,533.50 60.60,514.30 72.80,494.00 80.90,486.00 89.60,474.80 97.10,486.00 105.20,487.00 113.30,496.10 121.40,494.00 129.50,500.10 137.60,489.60 145.70,491.00 153.70,498.10 161.80,506.20 169.90,515.30 178.00,529.50 185.10,534.10 194.20,526.50 202.30,524.40 209.10,524.40 217.20,515.30 224.30,510.70 232.40,515.30 241.50,526.50 249.60,520.40 257.70,525.40 265.80,531.50 273.90,531.50 281.00,524.80 289.10,531.50 297.20,526.50 305.30,523.40 313.40,515.90 321.50,502.20 329.60,473.80 337.70,467.80 345.70,448.50 353.80,443.50 361.90,448.50 370.00,459.30 378.10,460.70 386.20,464.70 394.30,470.80 402.10,469.80 409.20,462.70 417.30,461.30 425.40,451.60 433.50,445.50 441.60,452.60 449.70,469.80 457.80,485.00 465.90,512.30 474.00,523.40 482.00,524.80 489.10,528.90 497.20,518.40 505.30,502.20 513.40,480.90 521.50,462.70 528.60,435.40 536.70,425.20 545.80,416.70 554.90,419.20 563.00,422.80 571.10,425.20 579.20,435.40 587.30,457.60 594.00,474.80 601.10,471.80 609.20,475.90 617.30,459.70 625.40,438.40 633.50,433.70 641.60,436.40 649.70,432.30 656.80,431.30 664.90,444.50 673.00,457.60 681.10,474.80 689.20,496.10 697.30,520.00 705.40,520.00 713.50,510.30 721.60,505.20 729.70,492.00 737.80,469.80 745.90,447.50 754.00,428.30 761.70,412.70 770.20,418.20 778.30,425.20 786.00,435.00 793.10,443.50 801.20,460.10 809.30,455.20 817.40,458.00 825.50,460.70 833.60,465.30 841.70,463.70 849.80,474.20 857.90,471.40 866.00,475.90 874.10,480.30 881.10,492.00 889.20,504.20 897.30,515.30 905.40,516.70 913.50,516.70 921.60,514.30 929.70,515.30 937.80,523.40 945.90,529.50 954.00,536.20 961.70,540.20 970.20,531.50 978.30,527.50 985.00,519.40" fill="none" stroke="#ff4500" stroke-width="1" shape-rendering="crispEdges"/>
</g></svg>
<text x="12.2" y="420.5" font-family="Liberation Sans" font-size="10" fill="#fff" font-weight="normal" textLength="52.2" lengthAdjust="spacingAndGlyphs">Stoch(8,5,5)</text>
<text x="65.2" y="420.5" font-family="Liberation Sans" font-size="10" fill="#fff" font-weight="normal" textLength="34.4" lengthAdjust="spacingAndGlyphs">68.0000</text>
<text x="101.1" y="420.5" font-family="Liberation Sans" font-size="10" fill="#fff" font-weight="normal" textLength="34.5" lengthAdjust="spacingAndGlyphs">38.3833</text>
<text x="140.0" y="420.5" font-family="Liberation Sans" font-size="10" fill="#fff" font-weight="normal" textLength="34.1" lengthAdjust="spacingAndGlyphs">RSI(14)</text>
<text x="175.1" y="420.5" font-family="Liberation Sans" font-size="10" fill="#fff" font-weight="normal" textLength="35.0" lengthAdjust="spacingAndGlyphs">65.1681</text>
<text x="214.4" y="420.5" font-family="Liberation Sans" font-size="10" fill="#fff" font-weight="normal" textLength="33.5" lengthAdjust="spacingAndGlyphs">RSI(70)</text>
<text x="248.8" y="420.5" font-family="Liberation Sans" font-size="10" fill="#fff" font-weight="normal" textLength="35.0" lengthAdjust="spacingAndGlyphs">52.5826</text>
<rect x="987" y="409" width="2" height="1" fill="#ffffff" />
<rect x="987" y="553" width="2" height="1" fill="#ffffff" />
<text x="990.2" y="418" font-family="Liberation Sans" font-size="10" fill="#fff" font-weight="normal" textLength="15.9" lengthAdjust="spacingAndGlyphs">100</text>
<text x="988.2" y="448" font-family="Liberation Sans" font-size="10" fill="#fff" font-weight="normal" textLength="11.9" lengthAdjust="spacingAndGlyphs">75</text>
<text x="988.2" y="484" font-family="Liberation Sans" font-size="10" fill="#fff" font-weight="normal" textLength="11.9" lengthAdjust="spacingAndGlyphs">50</text>
<text x="988.2" y="520.5" font-family="Liberation Sans" font-size="10" fill="#fff" font-weight="normal" textLength="11.9" lengthAdjust="spacingAndGlyphs">25</text>
<text x="990.0" y="551" font-family="Liberation Sans" font-size="10" fill="#fff" font-weight="normal" textLength="7.6" lengthAdjust="spacingAndGlyphs">0</text>
<svg x="9" y="557" width="977" height="124" overflow="hidden"><g transform="translate(-9,-557)">
<line x1="10" y1="598.5" x2="986" y2="598.5" stroke="#00ff00" stroke-width="1" stroke-dasharray="3,3" shape-rendering="crispEdges"/>
<rect x="9" y="599" width="1" height="9" fill="#c0c0c0" />
<rect x="17" y="599" width="1" height="13" fill="#c0c0c0" />
<rect x="25" y="599" width="1" height="17" fill="#c0c0c0" />
<rect x="33" y="599" width="1" height="25" fill="#c0c0c0" />
<rect x="41" y="599" width="1" height="27" fill="#c0c0c0" />
<rect x="49" y="599" width="1" height="30" fill="#c0c0c0" />
<rect x="57" y="599" width="1" height="25" fill="#c0c0c0" />
<rect x="65" y="599" width="1" height="24" fill="#c0c0c0" />
<rect x="73" y="599" width="1" height="23" fill="#c0c0c0" />
<rect x="81" y="599" width="1" height="25" fill="#c0c0c0" />
<rect x="89" y="599" width="1" height="24" fill="#c0c0c0" />
<rect x="97" y="599" width="1" height="28" fill="#c0c0c0" />
<rect x="105" y="599" width="1" height="27" fill="#c0c0c0" />
<rect x="113" y="599" width="1" height="26" fill="#c0c0c0" />
<rect x="121" y="599" width="1" height="25" fill="#c0c0c0" />
<rect x="129" y="599" width="1" height="24" fill="#c0c0c0" />
<rect x="137" y="599" width="1" height="21" fill="#c0c0c0" />
<rect x="145" y="599" width="1" height="21" fill="#c0c0c0" />
<rect x="153" y="599" width="1" height="25" fill="#c0c0c0" />
<rect x="161" y="599" width="1" height="32" fill="#c0c0c0" />
<rect x="169" y="599" width="1" height="39" fill="#c0c0c0" />
<rect x="177" y="599" width="1" height="44" fill="#c0c0c0" />
<rect x="185" y="599" width="1" height="45" fill="#c0c0c0" />
<rect x="193" y="599" width="1" height="44" fill="#c0c0c0" />
<rect x="201" y="599" width="1" height="43" fill="#c0c0c0" />
<rect x="209" y="599" width="1" height="45" fill="#c0c0c0" />
<rect x="217" y="599" width="1" height="42" fill="#c0c0c0" />
<rect x="225" y="599" width="1" height="46" fill="#c0c0c0" />
<rect x="233" y="599" width="1" height="60" fill="#c0c0c0" />
<rect x="241" y="599" width="1" height="73" fill="#c0c0c0" />
<rect x="249" y="599" width="1" height="73" fill="#c0c0c0" />
<rect x="257" y="599" width="1" height="74" fill="#c0c0c0" />
<rect x="265" y="599" width="1" height="77" fill="#c0c0c0" />
<rect x="273" y="599" width="1" height="75" fill="#c0c0c0" />
<rect x="281" y="599" width="1" height="71" fill="#c0c0c0" />
<rect x="289" y="599" width="1" height="74" fill="#c0c0c0" />
<rect x="297" y="599" width="1" height="70" fill="#c0c0c0" />
<rect x="305" y="599" width="1" height="75" fill="#c0c0c0" />
<rect x="313" y="599" width="1" height="72" fill="#c0c0c0" />
<rect x="321" y="599" width="1" height="64" fill="#c0c0c0" />
<rect x="329" y="599" width="1" height="54" fill="#c0c0c0" />
<rect x="337" y="599" width="1" height="47" fill="#c0c0c0" />
<rect x="345" y="599" width="1" height="42" fill="#c0c0c0" />
<rect x="353" y="599" width="1" height="39" fill="#c0c0c0" />
<rect x="361" y="599" width="1" height="39" fill="#c0c0c0" />
<rect x="369" y="599" width="1" height="38" fill="#c0c0c0" />
<rect x="377" y="599" width="1" height="32" fill="#c0c0c0" />
<rect x="385" y="599" width="1" height="28" fill="#c0c0c0" />
<rect x="393" y="599" width="1" height="26" fill="#c0c0c0" />
<rect x="401" y="599" width="1" height="23" fill="#c0c0c0" />
<rect x="409" y="599" width="1" height="20" fill="#c0c0c0" />
<rect x="417" y="599" width="1" height="16" fill="#c0c0c0" />
<rect x="425" y="599" width="1" height="11" fill="#c0c0c0" />
<rect x="433" y="599" width="1" height="9" fill="#c0c0c0" />
<rect x="441" y="599" width="1" height="9" fill="#c0c0c0" />
<rect x="449" y="599" width="1" height="11" fill="#c0c0c0" />
<rect x="457" y="599" width="1" height="12" fill="#c0c0c0" />
<rect x="465" y="599" width="1" height="16" fill="#c0c0c0" />
<rect x="473" y="599" width="1" height="15" fill="#c0c0c0" />
<rect x="481" y="599" width="1" height="15" fill="#c0c0c0" />
<rect x="489" y="599" width="1" height="19" fill="#c0c0c0" />
<rect x="497" y="599" width="1" height="18" fill="#c0c0c0" />
<rect x="505" y="599" width="1" height="16" fill="#c0c0c0" />
<rect x="513" y="599" width="1" height="6" fill="#c0c0c0" />
<rect x="529" y="590" width="1" height="8" fill="#c0c0c0" />
<rect x="537" y="588" width="1" height="10" fill="#c0c0c0" />
<rect x="545" y="584" width="1" height="14" fill="#c0c0c0" />
<rect x="553" y="581" width="1" height="17" fill="#c0c0c0" />
<rect x="561" y="581" width="1" height="17" fill="#c0c0c0" />
<rect x="569" y="577" width="1" height="21" fill="#c0c0c0" />
<rect x="577" y="580" width="1" height="18" fill="#c0c0c0" />
<rect x="585" y="588" width="1" height="10" fill="#c0c0c0" />
<rect x="593" y="591" width="1" height="7" fill="#c0c0c0" />
<rect x="601" y="580" width="1" height="18" fill="#c0c0c0" />
<rect x="609" y="575" width="1" height="23" fill="#c0c0c0" />
<rect x="617" y="571" width="1" height="27" fill="#c0c0c0" />
<rect x="625" y="566" width="1" height="32" fill="#c0c0c0" />
<rect x="633" y="567" width="1" height="31" fill="#c0c0c0" />
<rect x="641" y="568" width="1" height="30" fill="#c0c0c0" />
<rect x="649" y="565" width="1" height="33" fill="#c0c0c0" />
<rect x="657" y="564" width="1" height="34" fill="#c0c0c0" />
<rect x="665" y="568" width="1" height="30" fill="#c0c0c0" />
<rect x="673" y="576" width="1" height="22" fill="#c0c0c0" />
<rect x="681" y="580" width="1" height="18" fill="#c0c0c0" />
<rect x="689" y="581" width="1" height="17" fill="#c0c0c0" />
<rect x="697" y="582" width="1" height="16" fill="#c0c0c0" />
<rect x="705" y="584" width="1" height="14" fill="#c0c0c0" />
<rect x="713" y="583" width="1" height="15" fill="#c0c0c0" />
<rect x="721" y="585" width="1" height="13" fill="#c0c0c0" />
<rect x="729" y="581" width="1" height="17" fill="#c0c0c0" />
<rect x="737" y="576" width="1" height="22" fill="#c0c0c0" />
<rect x="745" y="572" width="1" height="26" fill="#c0c0c0" />
<rect x="753" y="568" width="1" height="30" fill="#c0c0c0" />
<rect x="761" y="565" width="1" height="33" fill="#c0c0c0" />
<rect x="769" y="567" width="1" height="31" fill="#c0c0c0" />
<rect x="777" y="569" width="1" height="29" fill="#c0c0c0" />
<rect x="785" y="572" width="1" height="26" fill="#c0c0c0" />
<rect x="793" y="572" width="1" height="26" fill="#c0c0c0" />
<rect x="801" y="574" width="1" height="24" fill="#c0c0c0" />
<rect x="809" y="568" width="1" height="30" fill="#c0c0c0" />
<rect x="817" y="568" width="1" height="30" fill="#c0c0c0" />
<rect x="825" y="569" width="1" height="29" fill="#c0c0c0" />
<rect x="833" y="572" width="1" height="26" fill="#c0c0c0" />
<rect x="841" y="572" width="1" height="26" fill="#c0c0c0" />
<rect x="849" y="572" width="1" height="26" fill="#c0c0c0" />
<rect x="857" y="570" width="1" height="28" fill="#c0c0c0" />
<rect x="865" y="573" width="1" height="25" fill="#c0c0c0" />
<rect x="873" y="575" width="1" height="23" fill="#c0c0c0" />
<rect x="881" y="579" width="1" height="19" fill="#c0c0c0" />
<rect x="889" y="585" width="1" height="13" fill="#c0c0c0" />
<rect x="897" y="587" width="1" height="11" fill="#c0c0c0" />
<rect x="905" y="589" width="1" height="9" fill="#c0c0c0" />
<rect x="913" y="591" width="1" height="7" fill="#c0c0c0" />
<rect x="921" y="593" width="1" height="5" fill="#c0c0c0" />
<rect x="929" y="596" width="1" height="2" fill="#c0c0c0" />
<rect x="937" y="599" width="1" height="5" fill="#c0c0c0" />
<rect x="945" y="599" width="1" height="8" fill="#c0c0c0" />
<rect x="953" y="599" width="1" height="14" fill="#c0c0c0" />
<rect x="961" y="599" width="1" height="16" fill="#c0c0c0" />
<rect x="969" y="599" width="1" height="14" fill="#c0c0c0" />
<rect x="977" y="599" width="1" height="15" fill="#c0c0c0" />
<rect x="985" y="599" width="1" height="15" fill="#c0c0c0" />
<polyline points="9.00,607.30 15.80,610.20 25.40,615.10 33.20,622.80 41.00,625.20 48.70,628.30 57.40,622.80 65.20,622.40 72.90,620.50 81.60,623.20 89.40,621.90 97.10,626.30 105.90,625.20 113.60,624.40 121.40,623.20 130.10,621.90 137.80,619.00 145.60,619.30 153.30,622.80 161.10,629.60 169.80,638.00 177.60,642.20 185.30,643.20 194.00,641.80 201.80,641.20 208.70,643.20 217.40,640.30 225.20,644.10 232.90,657.70 241.70,672.20 249.40,671.30 257.20,672.20 265.90,675.20 273.60,672.80 281.40,668.40 289.10,672.20 297.90,667.80 305.60,673.60 313.40,670.30 321.10,661.60 329.80,650.90 337.60,644.10 345.30,640.30 353.10,637.40 361.80,637.40 369.60,636.00 378.30,628.60 386.00,625.20 393.80,623.80 400.00,621.90 409.50,618.00 425.00,609.30 433.80,607.30 441.50,607.30 449.30,609.30 457.00,609.70 465.70,614.10 472.50,612.80 480.30,612.20 490.00,618.00 497.70,616.00 505.50,613.50 513.20,603.40 521.00,597.60 529.70,589.50 537.40,587.60 545.20,583.70 553.90,580.20 561.70,581.20 569.40,576.70 577.20,580.20 585.90,588.90 592.90,590.90 601.60,579.20 609.40,574.40 618.10,570.10 625.90,565.70 633.60,567.60 641.40,567.60 649.10,565.10 656.90,563.70 665.60,568.20 673.30,576.30 681.10,580.20 688.80,581.20 697.60,582.10 705.30,584.50 713.10,583.10 720.80,585.00 729.50,581.20 737.30,576.30 745.00,572.40 752.80,568.20 761.50,564.30 769.30,567.60 777.00,569.00 784.80,571.50 793.80,572.40 801.50,574.40 809.30,567.60 817.00,567.60 824.80,568.60 832.50,571.50 842.20,571.50 850.00,572.40 857.70,570.10 865.50,573.40 873.20,574.80 881.00,579.20 889.70,586.00 897.40,587.00 905.20,588.90 912.90,590.90 921.70,592.80 929.40,596.70 937.20,603.40 944.90,606.40 953.60,612.20 961.40,614.10 969.10,612.20 976.90,613.10 985.00,613.10" fill="none" stroke="#ff0000" stroke-width="1" shape-rendering="crispEdges"/>
<polyline points="9.00,596.70 17.70,600.50 27.40,607.70 37.10,614.10 46.80,619.00 56.40,622.80 64.20,624.40 81.60,623.20 89.40,621.90 104.90,623.20 120.40,623.80 132.00,623.80 143.70,621.90 151.40,621.30 163.00,623.80 174.70,628.30 186.30,635.40 196.00,640.30 208.70,642.20 225.20,642.20 233.90,646.10 249.40,657.70 265.90,670.30 273.60,673.20 289.10,672.20 305.60,671.30 321.10,669.30 337.60,659.70 355.00,644.50 369.60,638.30 386.00,632.50 395.00,629.60 414.40,620.90 433.80,614.10 449.30,609.30 465.70,610.80 480.30,612.20 497.70,615.50 511.30,612.80 522.90,607.70 536.50,597.20 548.10,589.50 561.70,584.10 575.20,580.20 584.90,581.70 593.90,583.70 609.40,583.70 618.10,581.20 625.90,576.30 634.60,570.50 650.10,567.00 657.80,565.10 673.30,567.60 681.10,570.10 696.60,576.70 706.30,581.20 721.80,583.70 737.30,582.50 752.80,576.30 769.30,569.50 783.80,567.60 801.50,570.50 809.30,571.50 817.00,570.10 850.00,570.10 865.50,572.10 881.00,575.30 897.40,580.20 912.90,587.00 929.40,591.80 944.90,598.60 960.40,606.40 976.90,612.80 985.00,612.80" fill="none" stroke="#ffff00" stroke-width="1" shape-rendering="crispEdges"/>
<path d="M9,676 L9,681 L14.5,681 Z" fill="#778899"/>
</g></svg>
<text x="12.4" y="570.5" font-family="Liberation Sans" font-size="10" fill="#fff" font-weight="normal" textLength="63.4" lengthAdjust="spacingAndGlyphs">MACD(5,34,5)</text>
<text x="76.1" y="570.5" font-family="Liberation Sans" font-size="10" fill="#fff" font-weight="normal" textLength="35.4" lengthAdjust="spacingAndGlyphs">0.00031</text>
<text x="112.2" y="570.5" font-family="Liberation Sans" font-size="10" fill="#fff" font-weight="normal" textLength="38.3" lengthAdjust="spacingAndGlyphs">-0.00001</text>
<text x="154.6" y="570.5" font-family="Liberation Sans" font-size="10" fill="#fff" font-weight="normal" textLength="42.7" lengthAdjust="spacingAndGlyphs">=&gt;MA(1)</text>
<text x="197.4" y="570.5" font-family="Liberation Sans" font-size="10" fill="#fff" font-weight="normal" textLength="34.5" lengthAdjust="spacingAndGlyphs">0.00031</text>
<rect x="987" y="556" width="2" height="1" fill="#ffffff" />
<text x="988.5" y="567" font-family="Liberation Sans" font-size="10" fill="#fff" font-weight="normal" textLength="34.5" lengthAdjust="spacingAndGlyphs">0.00166</text>
<text x="988.5" y="601" font-family="Liberation Sans" font-size="10" fill="#fff" font-weight="normal" textLength="19" lengthAdjust="spacingAndGlyphs">0.00</text>
<text x="989.3" y="601" font-family="Liberation Sans" font-size="10" fill="#fff" font-weight="normal" >0</text>
<rect x="987" y="598" width="2" height="1" fill="#ffffff" />
<text x="988.5" y="678.5" font-family="Liberation Sans" font-size="10" fill="#fff" font-weight="normal" textLength="38.9" lengthAdjust="spacingAndGlyphs">-0.00341</text>
<rect x="9" y="682" width="1" height="3" fill="#ffffff" />
<text x="7.2" y="694" font-family="Liberation Sans" font-size="10" fill="#fff" font-weight="normal" textLength="48.1" lengthAdjust="spacingAndGlyphs">2 Oct 2008</text>
<rect x="73" y="682" width="1" height="3" fill="#ffffff" />
<text x="71.2" y="694" font-family="Liberation Sans" font-size="10" fill="#fff" font-weight="normal" textLength="51.1" lengthAdjust="spacingAndGlyphs">2 Oct 10:05</text>
<rect x="137" y="682" width="1" height="3" fill="#ffffff" />
<text x="135.2" y="694" font-family="Liberation Sans" font-size="10" fill="#fff" font-weight="normal" textLength="51.1" lengthAdjust="spacingAndGlyphs">2 Oct 10:13</text>
<rect x="201" y="682" width="1" height="3" fill="#ffffff" />
<text x="199.2" y="694" font-family="Liberation Sans" font-size="10" fill="#fff" font-weight="normal" textLength="51.1" lengthAdjust="spacingAndGlyphs">2 Oct 10:21</text>
<rect x="265" y="682" width="1" height="3" fill="#ffffff" />
<text x="263.2" y="694" font-family="Liberation Sans" font-size="10" fill="#fff" font-weight="normal" textLength="51.1" lengthAdjust="spacingAndGlyphs">2 Oct 10:30</text>
<rect x="329" y="682" width="1" height="3" fill="#ffffff" />
<text x="327.2" y="694" font-family="Liberation Sans" font-size="10" fill="#fff" font-weight="normal" textLength="51.1" lengthAdjust="spacingAndGlyphs">2 Oct 10:38</text>
<rect x="393" y="682" width="1" height="3" fill="#ffffff" />
<text x="391.2" y="694" font-family="Liberation Sans" font-size="10" fill="#fff" font-weight="normal" textLength="51.1" lengthAdjust="spacingAndGlyphs">2 Oct 10:46</text>
<rect x="457" y="682" width="1" height="3" fill="#ffffff" />
<text x="455.2" y="694" font-family="Liberation Sans" font-size="10" fill="#fff" font-weight="normal" textLength="51.1" lengthAdjust="spacingAndGlyphs">2 Oct 10:54</text>
<rect x="521" y="682" width="1" height="3" fill="#ffffff" />
<text x="519.2" y="694" font-family="Liberation Sans" font-size="10" fill="#fff" font-weight="normal" textLength="51.1" lengthAdjust="spacingAndGlyphs">2 Oct 11:02</text>
<rect x="585" y="682" width="1" height="3" fill="#ffffff" />
<text x="583.2" y="694" font-family="Liberation Sans" font-size="10" fill="#fff" font-weight="normal" textLength="51.1" lengthAdjust="spacingAndGlyphs">2 Oct 11:10</text>
<rect x="649" y="682" width="1" height="3" fill="#ffffff" />
<text x="647.2" y="694" font-family="Liberation Sans" font-size="10" fill="#fff" font-weight="normal" textLength="51.1" lengthAdjust="spacingAndGlyphs">2 Oct 11:18</text>
<rect x="713" y="682" width="1" height="3" fill="#ffffff" />
<text x="711.2" y="694" font-family="Liberation Sans" font-size="10" fill="#fff" font-weight="normal" textLength="51.1" lengthAdjust="spacingAndGlyphs">2 Oct 11:26</text>
<rect x="777" y="682" width="1" height="3" fill="#ffffff" />
<text x="775.2" y="694" font-family="Liberation Sans" font-size="10" fill="#fff" font-weight="normal" textLength="51.1" lengthAdjust="spacingAndGlyphs">2 Oct 11:34</text>
<rect x="841" y="682" width="1" height="3" fill="#ffffff" />
<text x="839.2" y="694" font-family="Liberation Sans" font-size="10" fill="#fff" font-weight="normal" textLength="51.1" lengthAdjust="spacingAndGlyphs">2 Oct 11:42</text>
<rect x="905" y="682" width="1" height="3" fill="#ffffff" />
<text x="903.2" y="694" font-family="Liberation Sans" font-size="10" fill="#fff" font-weight="normal" textLength="51.1" lengthAdjust="spacingAndGlyphs">2 Oct 11:50</text>
<rect x="969" y="682" width="1" height="3" fill="#ffffff" />
<text x="967.2" y="694" font-family="Liberation Sans" font-size="10" fill="#fff" font-weight="normal" textLength="51.1" lengthAdjust="spacingAndGlyphs">2 Oct 11:58</text>
<rect x="4" y="701" width="1024" height="1" fill="#000000" />
<rect x="4" y="702" width="1024" height="19" fill="#ece9d8" />
<rect x="4" y="702" width="1" height="19" fill="#716f64" />
<rect x="5" y="702" width="1" height="19" fill="#aca899" />
<rect x="84" y="705" width="1" height="12" fill="#716f64" />
<rect x="164" y="705" width="1" height="12" fill="#716f64" />
<text x="17.0" y="714" font-family="Liberation Sans" font-size="10" fill="#6d6a5c" font-weight="normal" textLength="55" lengthAdjust="spacingAndGlyphs">EURJPY,M1</text>
<text x="94.0" y="714" font-family="Liberation Sans" font-size="10" fill="#6d6a5c" font-weight="normal" textLength="58" lengthAdjust="spacingAndGlyphs">USDCHF,M1</text>
<text x="174.0" y="714" font-family="Liberation Sans" font-size="10" fill="#6d6a5c" font-weight="normal" textLength="56.5" lengthAdjust="spacingAndGlyphs">GBPUSD,M1</text>
<rect x="244" y="701" width="80" height="19" fill="#ffffff" />
<rect x="243" y="701" width="1" height="19" fill="#000" />
<rect x="324" y="701" width="1" height="19" fill="#000" />
<rect x="243" y="719" width="82" height="1" fill="#000" />
<rect x="325" y="702" width="1" height="19" fill="#aca899" />
<rect x="244" y="720" width="82" height="1" fill="#aca899" />
<text x="254" y="714" font-family="Liberation Sans" font-size="10" fill="#000" font-weight="normal" textLength="58" lengthAdjust="spacingAndGlyphs">EURUSD,M1</text>
<path d="M1004,707 L1000,711 L1004,715 Z" fill="#a0a0a0"/>
<path d="M1017,707 L1021,711 L1017,715 Z" fill="#a0a0a0"/>
<rect x="4" y="721" width="1024" height="1" fill="#ffffff" />
<rect x="4" y="722" width="1024" height="20" fill="#ece9d8" />
<rect x="157" y="725" width="1" height="16" fill="#aca899" />
<rect x="158" y="725" width="1" height="16" fill="#ffffff" />
<rect x="320" y="725" width="1" height="16" fill="#aca899" />
<rect x="321" y="725" width="1" height="16" fill="#ffffff" />
<rect x="436" y="725" width="1" height="16" fill="#aca899" />
<rect x="437" y="725" width="1" height="16" fill="#ffffff" />
<rect x="522" y="725" width="1" height="16" fill="#aca899" />
<rect x="523" y="725" width="1" height="16" fill="#ffffff" />
<rect x="608" y="725" width="1" height="16" fill="#aca899" />
<rect x="609" y="725" width="1" height="16" fill="#ffffff" />
<rect x="694" y="725" width="1" height="16" fill="#aca899" />
<rect x="695" y="725" width="1" height="16" fill="#ffffff" />
<rect x="780" y="725" width="1" height="16" fill="#aca899" />
<rect x="781" y="725" width="1" height="16" fill="#ffffff" />
<rect x="866" y="725" width="1" height="16" fill="#aca899" />
<rect x="867" y="725" width="1" height="16" fill="#ffffff" />
<path d="M9,727h7v1h-7zM15,728h1v1h-1zM10,729h6v1h-6zM9,730h7v1h-7zM14,731h1v1h-1zM8,732h9v1h-9zM10,733h1v1h-1zM14,733h1v1h-1zM10,734h2v1h-2zM14,734h1v1h-1zM14,735h1v1h-1zM12,736h3v1h-3zM21,727h2v1h-2zM24,727h1v1h-1zM21,728h2v1h-2zM24,728h2v1h-2zM17,729h10v1h-10zM18,730h1v1h-1zM21,730h2v1h-2zM25,730h1v1h-1zM18,731h2v1h-2zM21,731h2v1h-2zM24,731h2v1h-2zM19,732h1v1h-1zM21,732h4v1h-4zM20,733h5v1h-5zM18,734h2v1h-2zM21,734h2v1h-2zM24,734h2v1h-2zM17,735h2v1h-2zM21,735h2v1h-2zM25,735h2v1h-2zM20,736h2v1h-2zM31,727h1v1h-1zM34,727h4v1h-4zM29,728h6v1h-6zM37,728h1v1h-1zM29,729h6v1h-6zM36,729h1v1h-1zM31,730h1v1h-1zM34,730h1v1h-1zM37,730h1v1h-1zM29,731h9v1h-9zM29,732h2v1h-2zM33,732h2v1h-2zM29,733h9v1h-9zM30,734h1v1h-1zM33,734h1v1h-1zM37,734h1v1h-1zM30,735h1v1h-1zM33,735h1v1h-1zM36,735h2v1h-2zM33,736h1v1h-1zM35,736h2v1h-2zM40,727h4v1h-4zM46,727h1v1h-1zM40,728h1v1h-1zM43,728h1v1h-1zM46,728h1v1h-1zM40,729h1v1h-1zM43,729h6v1h-6zM40,730h4v1h-4zM46,730h1v1h-1zM48,730h1v1h-1zM40,731h1v1h-1zM43,731h1v1h-1zM46,731h1v1h-1zM48,731h1v1h-1zM40,732h4v1h-4zM45,732h2v1h-2zM48,732h1v1h-1zM40,733h1v1h-1zM43,733h1v1h-1zM45,733h1v1h-1zM48,733h1v1h-1zM40,734h1v1h-1zM42,734h4v1h-4zM48,734h1v1h-1zM39,735h3v1h-3zM44,735h1v1h-1zM48,735h1v1h-1zM43,736h2v1h-2zM46,736h3v1h-3zM57,727h1v1h-1zM62,727h1v1h-1zM57,728h2v1h-2zM60,728h5v1h-5zM60,729h5v1h-5zM56,730h2v1h-2zM60,730h6v1h-6zM57,731h2v1h-2zM61,731h4v1h-4zM57,732h2v1h-2zM60,732h5v1h-5zM57,733h2v1h-2zM60,733h5v1h-5zM57,734h4v1h-4zM64,734h1v1h-1zM57,735h2v1h-2zM60,735h1v1h-1zM64,735h1v1h-1zM57,736h1v1h-1zM60,736h1v1h-1zM63,736h2v1h-2zM68,727h1v1h-1zM73,727h1v1h-1zM68,728h9v1h-9zM67,729h5v1h-5zM73,729h1v1h-1zM76,729h1v1h-1zM68,730h1v1h-1zM72,730h2v1h-2zM68,731h1v1h-1zM70,731h7v1h-7zM68,732h3v1h-3zM72,732h1v1h-1zM75,732h1v1h-1zM67,733h2v1h-2zM71,733h2v1h-2zM74,733h1v1h-1zM68,734h1v1h-1zM72,734h3v1h-3zM68,735h1v1h-1zM72,735h4v1h-4zM67,736h2v1h-2zM71,736h2v1h-2zM76,736h1v1h-1zM91,727h1v1h-1zM94,727h1v1h-1zM97,727h1v1h-1zM90,728h3v1h-3zM94,728h2v1h-2zM97,728h3v1h-3zM90,729h1v1h-1zM94,729h1v1h-1zM96,729h4v1h-4zM90,730h3v1h-3zM94,730h1v1h-1zM97,730h3v1h-3zM91,731h1v1h-1zM93,731h6v1h-6zM90,732h3v1h-3zM95,732h5v1h-5zM91,733h1v1h-1zM93,733h2v1h-2zM97,733h1v1h-1zM91,734h1v1h-1zM94,734h1v1h-1zM96,734h4v1h-4zM91,735h5v1h-5zM97,735h1v1h-1zM91,736h1v1h-1zM93,736h1v1h-1zM96,736h4v1h-4z" fill="#000"/>
<rect x="51" y="735" width="2" height="2" fill="#000" />
<rect x="51" y="737" width="1" height="1" fill="#000" />
<text x="77.5" y="736.5" font-family="Liberation Serif" font-size="10.5" fill="#000" font-weight="bold" >F</text>
<text x="83.5" y="736.5" font-family="Liberation Serif" font-size="10.5" fill="#000" font-weight="bold" >1</text>
<path d="M176,728h4v1h-4zM193,728h3v1h-3zM162,729h5v1h-5zM176,729h1v1h-1zM195,729h1v1h-1zM200,729h1v1h-1zM162,730h2v1h-2zM166,730h2v1h-2zM169,730h4v1h-4zM174,730h6v1h-6zM181,730h4v1h-4zM187,730h1v1h-1zM190,730h2v1h-2zM195,730h1v1h-1zM199,730h4v1h-4zM162,731h2v1h-2zM167,731h1v1h-1zM169,731h1v1h-1zM172,731h2v1h-2zM176,731h1v1h-1zM181,731h1v1h-1zM184,731h1v1h-1zM187,731h1v1h-1zM190,731h2v1h-2zM195,731h1v1h-1zM200,731h1v1h-1zM162,732h2v1h-2zM167,732h7v1h-7zM176,732h1v1h-1zM181,732h4v1h-4zM187,732h1v1h-1zM190,732h2v1h-2zM195,732h1v1h-1zM200,732h1v1h-1zM162,733h2v1h-2zM166,733h4v1h-4zM176,733h1v1h-1zM180,733h2v1h-2zM184,733h1v1h-1zM187,733h1v1h-1zM190,733h2v1h-2zM195,733h1v1h-1zM200,733h1v1h-1zM162,734h2v1h-2zM166,734h1v1h-1zM169,734h1v1h-1zM176,734h1v1h-1zM180,734h2v1h-2zM184,734h1v1h-1zM187,734h1v1h-1zM190,734h2v1h-2zM195,734h1v1h-1zM200,734h1v1h-1zM162,735h5v1h-5zM169,735h4v1h-4zM176,735h1v1h-1zM181,735h5v1h-5zM187,735h5v1h-5zM195,735h3v1h-3zM200,735h3v1h-3z" fill="#000"/>
<rect x="872" y="736" width="2" height="3" fill="#0a3a60" />
<rect x="872" y="727" width="2" height="9" fill="#4a7a10" />
<rect x="875" y="735" width="2" height="4" fill="#0a3a60" />
<rect x="875" y="727" width="2" height="8" fill="#4a7a10" />
<rect x="878" y="734" width="2" height="5" fill="#0a3a60" />
<rect x="878" y="727" width="2" height="7" fill="#4a7a10" />
<rect x="881" y="733" width="2" height="6" fill="#0a3a60" />
<rect x="881" y="727" width="2" height="6" fill="#4a7a10" />
<rect x="884" y="732" width="2" height="7" fill="#0a3a60" />
<rect x="884" y="727" width="2" height="5" fill="#4a7a10" />
<rect x="887" y="731" width="2" height="8" fill="#0a3a60" />
<rect x="887" y="727" width="2" height="4" fill="#4a7a10" />
<rect x="890" y="730" width="2" height="9" fill="#0a3a60" />
<rect x="890" y="727" width="2" height="3" fill="#4a7a10" />
<rect x="893" y="729" width="2" height="10" fill="#0a3a60" />
<rect x="893" y="727" width="2" height="2" fill="#4a7a10" />
<rect x="893" y="727" width="2" height="1" fill="#90d090" />
<path d="M948,728h2v1h-2zM963,728h1v1h-1zM969,728h1v1h-1zM933,729h5v1h-5zM939,729h4v1h-4zM948,729h1v1h-1zM952,729h2v1h-2zM963,729h1v1h-1zM969,729h1v1h-1zM936,730h1v1h-1zM939,730h1v1h-1zM947,730h2v1h-2zM950,730h2v1h-2zM953,730h1v1h-1zM963,730h1v1h-1zM966,730h1v1h-1zM969,730h4v1h-4zM935,731h1v1h-1zM938,731h5v1h-5zM947,731h1v1h-1zM953,731h1v1h-1zM963,731h1v1h-1zM965,731h1v1h-1zM969,731h1v1h-1zM972,731h2v1h-2zM935,732h1v1h-1zM938,732h2v1h-2zM942,732h2v1h-2zM946,732h1v1h-1zM953,732h1v1h-1zM963,732h3v1h-3zM969,732h1v1h-1zM972,732h2v1h-2zM934,733h2v1h-2zM938,733h2v1h-2zM942,733h2v1h-2zM946,733h1v1h-1zM953,733h1v1h-1zM963,733h3v1h-3zM969,733h1v1h-1zM972,733h2v1h-2zM934,734h1v1h-1zM939,734h1v1h-1zM942,734h2v1h-2zM945,734h1v1h-1zM953,734h1v1h-1zM963,734h1v1h-1zM965,734h2v1h-2zM969,734h1v1h-1zM972,734h2v1h-2zM934,735h1v1h-1zM939,735h4v1h-4zM944,735h2v1h-2zM951,735h5v1h-5zM963,735h1v1h-1zM966,735h2v1h-2zM969,735h4v1h-4z" fill="#000"/>
<rect x="4" y="742" width="1024" height="4" fill="#3a7ce8" />
<rect x="4" y="742" width="1024" height="1" fill="#1f56d0" />
<rect x="4" y="742" width="94" height="4" fill="#62ae62" />
<rect x="4" y="742" width="94" height="1" fill="#2e822e" />
<rect x="915" y="742" width="113" height="4" fill="#1cb0f8" />
<rect x="915" y="742" width="113" height="1" fill="#0e90e0" />
<rect x="915" y="742" width="1" height="4" fill="#103a90" />
</svg></body></html>
